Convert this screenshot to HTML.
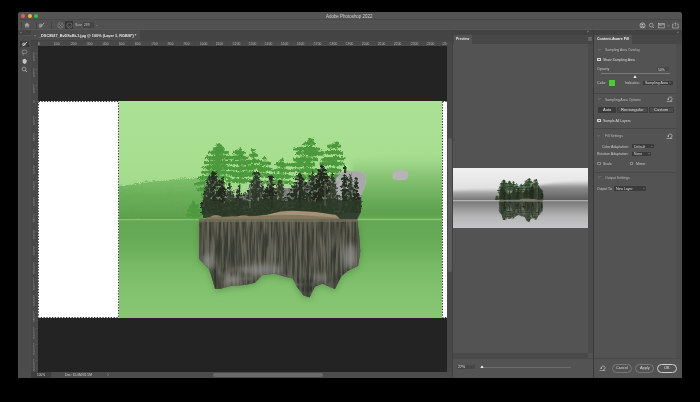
<!DOCTYPE html>
<html><head><meta charset="utf-8">
<style>
*{margin:0;padding:0;box-sizing:border-box}
html,body{width:700px;height:402px;background:#000;overflow:hidden;font-family:"Liberation Sans",sans-serif;color:#ddd}
div,span{position:absolute}
.t{will-change:transform;white-space:nowrap;font-size:3.6px;line-height:4px;color:#cfcfcf}
.b{font-weight:bold}
.dd{background:#3b3b3b;border-radius:0.6px}
.sep{background:#444}
svg{position:absolute;overflow:hidden}
</style></head><body>
<!-- window base -->
<div style="left:18px;top:12px;width:664px;height:366px;background:#535353;border-radius:3px 3px 0 0"></div>
<!-- title bar -->
<div style="left:18px;top:12px;width:664px;height:7.5px;background:#545454;border-radius:3px 3px 0 0"></div>
<div style="left:18px;top:19.2px;width:664px;height:0.8px;background:#494949"></div>
<div style="left:21px;top:13.75px;width:4px;height:4px;border-radius:50%;background:#ed5b53"></div>
<div style="left:27.5px;top:13.75px;width:4px;height:4px;border-radius:50%;background:#f4b733"></div>
<div style="left:34px;top:13.75px;width:4px;height:4px;border-radius:50%;background:#31c23f"></div>
<div class="t" style="left:326.4px;top:13.6px;font-size:4.45px;line-height:5px;color:#d4d4d4">Adobe Photoshop 2022</div>

<!-- options bar -->
<div style="left:18px;top:20px;width:664px;height:10px;background:#515151"></div>
<div style="left:18px;top:29.3px;width:664px;height:0.7px;background:#575757"></div>
<div class="sep" style="left:21.3px;top:21.5px;width:0.5px;height:7px"></div>
<div class="sep" style="left:35.5px;top:21.5px;width:0.5px;height:7px"></div>
<div class="sep" style="left:51.3px;top:21.5px;width:0.5px;height:7px"></div>
<!-- home icon -->
<svg style="left:24px;top:22px" width="6" height="6" viewBox="0 0 6 6"><path d="M0.5 3.1 L3 0.8 L5.5 3.1" fill="none" stroke="#a8a8a8" stroke-width="0.7"/><path d="M1.3 2.6 V5.4 H2.5 V4 H3.5 V5.4 H4.7 V2.6 L3 1.2Z" fill="#a8a8a8"/></svg>
<!-- brush icon -->
<svg style="left:37.5px;top:21.8px" width="7" height="6.5" viewBox="0 0 7 6.5"><circle cx="2.6" cy="3.6" r="2" fill="#858585"/><path d="M1.6 5.6 L6.4 0.8" stroke="#b5b5b5" stroke-width="0.9"/></svg>
<div class="t" style="left:46.5px;top:23px;color:#777">-</div>
<!-- circle icons -->
<svg style="left:56.5px;top:21.8px" width="7" height="7" viewBox="0 0 7 7"><circle cx="3.5" cy="3.5" r="2.7" fill="none" stroke="#9a9a9a" stroke-width="0.5"/><path d="M2.1 2.1 L4.9 4.9 M4.9 2.1 L2.1 4.9" stroke="#9a9a9a" stroke-width="0.45"/></svg>
<div style="left:65px;top:21.3px;width:8px;height:7.8px;background:#353535;border-radius:0.5px"></div>
<svg style="left:65.5px;top:21.7px" width="7" height="7" viewBox="0 0 7 7"><circle cx="3.5" cy="3.5" r="2.6" fill="none" stroke="#9a9a9a" stroke-width="0.5"/><path d="M2.2 4 Q3.5 5 4.8 4" fill="none" stroke="#9a9a9a" stroke-width="0.4"/></svg>
<div class="t" style="left:75px;top:23.3px;color:#b8b8b8">Size</div>
<div class="dd" style="left:82.8px;top:22px;width:11.5px;height:6px;background:#454545"></div>
<div class="t" style="left:84px;top:23.2px;color:#c8c8c8;font-size:3.3px">299</div>
<svg style="left:95.6px;top:24.6px" width="2.4" height="1.6" viewBox="0 0 2.4 1.6"><path d="M0.3 0.3 L1.2 1.2 L2.1 0.3" fill="none" stroke="#b0b0b0" stroke-width="0.45"/></svg>
<!-- right icons -->
<svg style="left:639px;top:21.5px" width="40" height="7" viewBox="0 0 40 7">
 <circle cx="3.5" cy="3.4" r="2.5" fill="none" stroke="#d0d0d0" stroke-width="0.7"/><circle cx="3.4" cy="2.6" r="0.9" fill="#d0d0d0"/><path d="M1.9 5.2 Q3.4 3.6 4.9 5.2" fill="none" stroke="#d0d0d0" stroke-width="0.7"/><path d="M5 5.4 L5.9 6.3" stroke="#d0d0d0" stroke-width="0.5"/>
 <circle cx="12.3" cy="3.2" r="1.9" fill="none" stroke="#c8c8c8" stroke-width="0.6"/><path d="M13.6 4.5 L15 5.9" stroke="#c8c8c8" stroke-width="0.7"/>
 <rect x="19.6" y="1.3" width="5.6" height="4.6" fill="none" stroke="#c8c8c8" stroke-width="0.55"/><path d="M19.6 2.6 H25.2 M20.6 3.5 H22.4" stroke="#c8c8c8" stroke-width="0.5"/>
 <path d="M28.4 3 L29.5 4.1 L30.6 3" fill="none" stroke="#aaa" stroke-width="0.45"/>
 <path d="M34.8 2 H33.6 V6 H39.2 V2 H38" fill="none" stroke="#c8c8c8" stroke-width="0.55"/><path d="M36.4 4.2 V0.8 M35.4 1.8 L36.4 0.8 L37.4 1.8" fill="none" stroke="#c8c8c8" stroke-width="0.5"/>
</svg>

<!-- tab row doc -->
<div style="left:18px;top:30px;width:435px;height:10.5px;background:#444"></div>
<div style="left:31px;top:30.3px;width:108.8px;height:10.2px;background:#4c4c4c"></div>
<div class="t" style="left:33.6px;top:33.6px;color:#aaa;font-size:3.4px">×</div>
<div class="t b" style="left:39.4px;top:33.6px;font-size:3.81px;color:#e6e6e6">_DSC8927_BvDScBt-1.jpg @ 100% (Layer 1, RGB/8*) *</div>

<!-- tools panel -->
<div style="left:18px;top:30px;width:13px;height:342px;background:#4b4b4b"></div>
<div style="left:18px;top:30px;width:13px;height:5px;background:#434343"></div>
<div class="t" style="left:20px;top:30.6px;color:#aaa;font-size:3.4px">«</div>
<div style="left:19.5px;top:35.3px;width:11px;height:0.5px;background:#545454"></div>
<div style="left:20.1px;top:40.5px;width:8.7px;height:6.8px;background:#393939;border-radius:0.5px"></div>
<svg style="left:21px;top:41px" width="7" height="6" viewBox="0 0 7 6"><circle cx="2.8" cy="3.2" r="1.9" fill="#888"/><path d="M1.8 5.2 L6.2 0.8" stroke="#d6d6d6" stroke-width="0.9"/></svg>
<svg style="left:21px;top:49px" width="7" height="7" viewBox="0 0 7 7"><ellipse cx="3.5" cy="2.8" rx="2.6" ry="1.8" fill="none" stroke="#bdbdbd" stroke-width="0.5"/><path d="M2 4.4 Q1.5 6 3 6.3" fill="none" stroke="#bdbdbd" stroke-width="0.5"/><circle cx="5.9" cy="6.2" r="0.3" fill="#999"/></svg>
<svg style="left:21px;top:57.6px" width="7" height="7" viewBox="0 0 7 7"><path d="M1.5 3 Q1.5 1 2.5 1.2 Q3 0.3 3.8 1 Q4.8 0.6 5 1.8 Q6 2 5.8 3.5 Q5.6 5.8 3.5 6 Q1.4 5.8 1.5 3Z" fill="#c4c4c4"/></svg>
<svg style="left:21px;top:65.5px" width="7" height="7" viewBox="0 0 7 7"><circle cx="3" cy="3" r="1.9" fill="none" stroke="#c4c4c4" stroke-width="0.6"/><path d="M4.3 4.3 L6 6" stroke="#c4c4c4" stroke-width="0.8"/></svg>

<!-- h ruler -->
<div style="left:31px;top:40.5px;width:416px;height:5.5px;background:#484848"></div>
<div style="left:31px;top:40.5px;width:7px;height:5.5px;background:#444"></div>

<!-- v ruler -->
<div style="left:31px;top:46px;width:7px;height:326px;background:#484848"></div>
<!-- canvas -->
<div style="left:38px;top:46px;width:409px;height:326px;background:#232323"></div>
<!-- v scrollbar -->
<div style="left:447px;top:40.5px;width:5.5px;height:331.5px;background:#484848"></div>
<div style="left:447.5px;top:138.2px;width:4.3px;height:133.4px;border-radius:2.1px;background:#5c5c5c"></div>
<!--RULERS-->
<div style="left:38px;top:40.5px;width:409px;height:5.5px;overflow:hidden">
<div style="left:-0.30px;top:1.5px;width:0.5px;height:4px;background:#545454"></div>
<div style="left:4.05px;top:4.5px;width:0.4px;height:1px;background:#505050"></div>
<div style="left:8.09px;top:4.5px;width:0.4px;height:1px;background:#505050"></div>
<div style="left:12.14px;top:4.5px;width:0.4px;height:1px;background:#505050"></div>
<div class="t" style="left:0.30px;top:2.5px;font-size:3.3px;line-height:3.3px;color:#b4b4b4">0</div>
<div style="left:15.89px;top:1.5px;width:0.5px;height:4px;background:#545454"></div>
<div style="left:20.24px;top:4.5px;width:0.4px;height:1px;background:#505050"></div>
<div style="left:24.28px;top:4.5px;width:0.4px;height:1px;background:#505050"></div>
<div style="left:28.33px;top:4.5px;width:0.4px;height:1px;background:#505050"></div>
<div class="t" style="left:16.49px;top:2.5px;font-size:3.3px;line-height:3.3px;color:#b4b4b4">100</div>
<div style="left:32.08px;top:1.5px;width:0.5px;height:4px;background:#545454"></div>
<div style="left:36.43px;top:4.5px;width:0.4px;height:1px;background:#505050"></div>
<div style="left:40.48px;top:4.5px;width:0.4px;height:1px;background:#505050"></div>
<div style="left:44.52px;top:4.5px;width:0.4px;height:1px;background:#505050"></div>
<div class="t" style="left:32.68px;top:2.5px;font-size:3.3px;line-height:3.3px;color:#b4b4b4">200</div>
<div style="left:48.27px;top:1.5px;width:0.5px;height:4px;background:#545454"></div>
<div style="left:52.62px;top:4.5px;width:0.4px;height:1px;background:#505050"></div>
<div style="left:56.67px;top:4.5px;width:0.4px;height:1px;background:#505050"></div>
<div style="left:60.71px;top:4.5px;width:0.4px;height:1px;background:#505050"></div>
<div class="t" style="left:48.87px;top:2.5px;font-size:3.3px;line-height:3.3px;color:#b4b4b4">300</div>
<div style="left:64.46px;top:1.5px;width:0.5px;height:4px;background:#545454"></div>
<div style="left:68.81px;top:4.5px;width:0.4px;height:1px;background:#505050"></div>
<div style="left:72.86px;top:4.5px;width:0.4px;height:1px;background:#505050"></div>
<div style="left:76.90px;top:4.5px;width:0.4px;height:1px;background:#505050"></div>
<div class="t" style="left:65.06px;top:2.5px;font-size:3.3px;line-height:3.3px;color:#b4b4b4">400</div>
<div style="left:80.65px;top:1.5px;width:0.5px;height:4px;background:#545454"></div>
<div style="left:85.00px;top:4.5px;width:0.4px;height:1px;background:#505050"></div>
<div style="left:89.05px;top:4.5px;width:0.4px;height:1px;background:#505050"></div>
<div style="left:93.09px;top:4.5px;width:0.4px;height:1px;background:#505050"></div>
<div class="t" style="left:81.25px;top:2.5px;font-size:3.3px;line-height:3.3px;color:#b4b4b4">500</div>
<div style="left:96.84px;top:1.5px;width:0.5px;height:4px;background:#545454"></div>
<div style="left:101.19px;top:4.5px;width:0.4px;height:1px;background:#505050"></div>
<div style="left:105.23px;top:4.5px;width:0.4px;height:1px;background:#505050"></div>
<div style="left:109.28px;top:4.5px;width:0.4px;height:1px;background:#505050"></div>
<div class="t" style="left:97.44px;top:2.5px;font-size:3.3px;line-height:3.3px;color:#b4b4b4">600</div>
<div style="left:113.03px;top:1.5px;width:0.5px;height:4px;background:#545454"></div>
<div style="left:117.38px;top:4.5px;width:0.4px;height:1px;background:#505050"></div>
<div style="left:121.42px;top:4.5px;width:0.4px;height:1px;background:#505050"></div>
<div style="left:125.47px;top:4.5px;width:0.4px;height:1px;background:#505050"></div>
<div class="t" style="left:113.63px;top:2.5px;font-size:3.3px;line-height:3.3px;color:#b4b4b4">700</div>
<div style="left:129.22px;top:1.5px;width:0.5px;height:4px;background:#545454"></div>
<div style="left:133.57px;top:4.5px;width:0.4px;height:1px;background:#505050"></div>
<div style="left:137.61px;top:4.5px;width:0.4px;height:1px;background:#505050"></div>
<div style="left:141.66px;top:4.5px;width:0.4px;height:1px;background:#505050"></div>
<div class="t" style="left:129.82px;top:2.5px;font-size:3.3px;line-height:3.3px;color:#b4b4b4">800</div>
<div style="left:145.41px;top:1.5px;width:0.5px;height:4px;background:#545454"></div>
<div style="left:149.76px;top:4.5px;width:0.4px;height:1px;background:#505050"></div>
<div style="left:153.80px;top:4.5px;width:0.4px;height:1px;background:#505050"></div>
<div style="left:157.85px;top:4.5px;width:0.4px;height:1px;background:#505050"></div>
<div class="t" style="left:146.01px;top:2.5px;font-size:3.3px;line-height:3.3px;color:#b4b4b4">900</div>
<div style="left:161.60px;top:1.5px;width:0.5px;height:4px;background:#545454"></div>
<div style="left:165.95px;top:4.5px;width:0.4px;height:1px;background:#505050"></div>
<div style="left:169.99px;top:4.5px;width:0.4px;height:1px;background:#505050"></div>
<div style="left:174.04px;top:4.5px;width:0.4px;height:1px;background:#505050"></div>
<div class="t" style="left:162.20px;top:2.5px;font-size:3.3px;line-height:3.3px;color:#b4b4b4">1000</div>
<div style="left:177.79px;top:1.5px;width:0.5px;height:4px;background:#545454"></div>
<div style="left:182.14px;top:4.5px;width:0.4px;height:1px;background:#505050"></div>
<div style="left:186.18px;top:4.5px;width:0.4px;height:1px;background:#505050"></div>
<div style="left:190.23px;top:4.5px;width:0.4px;height:1px;background:#505050"></div>
<div class="t" style="left:178.39px;top:2.5px;font-size:3.3px;line-height:3.3px;color:#b4b4b4">1100</div>
<div style="left:193.98px;top:1.5px;width:0.5px;height:4px;background:#545454"></div>
<div style="left:198.33px;top:4.5px;width:0.4px;height:1px;background:#505050"></div>
<div style="left:202.38px;top:4.5px;width:0.4px;height:1px;background:#505050"></div>
<div style="left:206.42px;top:4.5px;width:0.4px;height:1px;background:#505050"></div>
<div class="t" style="left:194.58px;top:2.5px;font-size:3.3px;line-height:3.3px;color:#b4b4b4">1200</div>
<div style="left:210.17px;top:1.5px;width:0.5px;height:4px;background:#545454"></div>
<div style="left:214.52px;top:4.5px;width:0.4px;height:1px;background:#505050"></div>
<div style="left:218.57px;top:4.5px;width:0.4px;height:1px;background:#505050"></div>
<div style="left:222.61px;top:4.5px;width:0.4px;height:1px;background:#505050"></div>
<div class="t" style="left:210.77px;top:2.5px;font-size:3.3px;line-height:3.3px;color:#b4b4b4">1300</div>
<div style="left:226.36px;top:1.5px;width:0.5px;height:4px;background:#545454"></div>
<div style="left:230.71px;top:4.5px;width:0.4px;height:1px;background:#505050"></div>
<div style="left:234.76px;top:4.5px;width:0.4px;height:1px;background:#505050"></div>
<div style="left:238.80px;top:4.5px;width:0.4px;height:1px;background:#505050"></div>
<div class="t" style="left:226.96px;top:2.5px;font-size:3.3px;line-height:3.3px;color:#b4b4b4">1400</div>
<div style="left:242.55px;top:1.5px;width:0.5px;height:4px;background:#545454"></div>
<div style="left:246.90px;top:4.5px;width:0.4px;height:1px;background:#505050"></div>
<div style="left:250.95px;top:4.5px;width:0.4px;height:1px;background:#505050"></div>
<div style="left:254.99px;top:4.5px;width:0.4px;height:1px;background:#505050"></div>
<div class="t" style="left:243.15px;top:2.5px;font-size:3.3px;line-height:3.3px;color:#b4b4b4">1500</div>
<div style="left:258.74px;top:1.5px;width:0.5px;height:4px;background:#545454"></div>
<div style="left:263.09px;top:4.5px;width:0.4px;height:1px;background:#505050"></div>
<div style="left:267.14px;top:4.5px;width:0.4px;height:1px;background:#505050"></div>
<div style="left:271.18px;top:4.5px;width:0.4px;height:1px;background:#505050"></div>
<div class="t" style="left:259.34px;top:2.5px;font-size:3.3px;line-height:3.3px;color:#b4b4b4">1600</div>
<div style="left:274.93px;top:1.5px;width:0.5px;height:4px;background:#545454"></div>
<div style="left:279.28px;top:4.5px;width:0.4px;height:1px;background:#505050"></div>
<div style="left:283.33px;top:4.5px;width:0.4px;height:1px;background:#505050"></div>
<div style="left:287.37px;top:4.5px;width:0.4px;height:1px;background:#505050"></div>
<div class="t" style="left:275.53px;top:2.5px;font-size:3.3px;line-height:3.3px;color:#b4b4b4">1700</div>
<div style="left:291.12px;top:1.5px;width:0.5px;height:4px;background:#545454"></div>
<div style="left:295.47px;top:4.5px;width:0.4px;height:1px;background:#505050"></div>
<div style="left:299.52px;top:4.5px;width:0.4px;height:1px;background:#505050"></div>
<div style="left:303.56px;top:4.5px;width:0.4px;height:1px;background:#505050"></div>
<div class="t" style="left:291.72px;top:2.5px;font-size:3.3px;line-height:3.3px;color:#b4b4b4">1800</div>
<div style="left:307.31px;top:1.5px;width:0.5px;height:4px;background:#545454"></div>
<div style="left:311.66px;top:4.5px;width:0.4px;height:1px;background:#505050"></div>
<div style="left:315.71px;top:4.5px;width:0.4px;height:1px;background:#505050"></div>
<div style="left:319.75px;top:4.5px;width:0.4px;height:1px;background:#505050"></div>
<div class="t" style="left:307.91px;top:2.5px;font-size:3.3px;line-height:3.3px;color:#b4b4b4">1900</div>
<div style="left:323.50px;top:1.5px;width:0.5px;height:4px;background:#545454"></div>
<div style="left:327.85px;top:4.5px;width:0.4px;height:1px;background:#505050"></div>
<div style="left:331.90px;top:4.5px;width:0.4px;height:1px;background:#505050"></div>
<div style="left:335.94px;top:4.5px;width:0.4px;height:1px;background:#505050"></div>
<div class="t" style="left:324.10px;top:2.5px;font-size:3.3px;line-height:3.3px;color:#b4b4b4">2000</div>
<div style="left:339.69px;top:1.5px;width:0.5px;height:4px;background:#545454"></div>
<div style="left:344.04px;top:4.5px;width:0.4px;height:1px;background:#505050"></div>
<div style="left:348.09px;top:4.5px;width:0.4px;height:1px;background:#505050"></div>
<div style="left:352.13px;top:4.5px;width:0.4px;height:1px;background:#505050"></div>
<div class="t" style="left:340.29px;top:2.5px;font-size:3.3px;line-height:3.3px;color:#b4b4b4">2100</div>
<div style="left:355.88px;top:1.5px;width:0.5px;height:4px;background:#545454"></div>
<div style="left:360.23px;top:4.5px;width:0.4px;height:1px;background:#505050"></div>
<div style="left:364.28px;top:4.5px;width:0.4px;height:1px;background:#505050"></div>
<div style="left:368.32px;top:4.5px;width:0.4px;height:1px;background:#505050"></div>
<div class="t" style="left:356.48px;top:2.5px;font-size:3.3px;line-height:3.3px;color:#b4b4b4">2200</div>
<div style="left:372.07px;top:1.5px;width:0.5px;height:4px;background:#545454"></div>
<div style="left:376.42px;top:4.5px;width:0.4px;height:1px;background:#505050"></div>
<div style="left:380.47px;top:4.5px;width:0.4px;height:1px;background:#505050"></div>
<div style="left:384.51px;top:4.5px;width:0.4px;height:1px;background:#505050"></div>
<div class="t" style="left:372.67px;top:2.5px;font-size:3.3px;line-height:3.3px;color:#b4b4b4">2300</div>
<div style="left:388.26px;top:1.5px;width:0.5px;height:4px;background:#545454"></div>
<div style="left:392.61px;top:4.5px;width:0.4px;height:1px;background:#505050"></div>
<div style="left:396.66px;top:4.5px;width:0.4px;height:1px;background:#505050"></div>
<div style="left:400.70px;top:4.5px;width:0.4px;height:1px;background:#505050"></div>
<div class="t" style="left:388.86px;top:2.5px;font-size:3.3px;line-height:3.3px;color:#b4b4b4">2400</div>
<div style="left:404.45px;top:1.5px;width:0.5px;height:4px;background:#545454"></div>
<div style="left:408.80px;top:4.5px;width:0.4px;height:1px;background:#505050"></div>
<div class="t" style="left:405.05px;top:2.5px;font-size:3.3px;line-height:3.3px;color:#b4b4b4">2500</div>
</div>
<div style="left:31px;top:46px;width:7px;height:326px;overflow:hidden">
<div style="left:4px;top:-9.56px;width:3px;height:0.5px;background:#545454"></div>
<div style="left:6px;top:2.88px;width:1px;height:0.4px;background:#505050"></div>
<div class="t" style="left:2px;top:-8.46px;font-size:2.6px;line-height:2.9px;color:#9a9a9a">4</div>
<div class="t" style="left:2px;top:-5.56px;font-size:2.6px;line-height:2.9px;color:#9a9a9a">0</div>
<div class="t" style="left:2px;top:-2.66px;font-size:2.6px;line-height:2.9px;color:#9a9a9a">0</div>
<div style="left:4px;top:6.63px;width:3px;height:0.5px;background:#545454"></div>
<div style="left:6px;top:10.98px;width:1px;height:0.4px;background:#505050"></div>
<div style="left:6px;top:15.02px;width:1px;height:0.4px;background:#505050"></div>
<div style="left:6px;top:19.07px;width:1px;height:0.4px;background:#505050"></div>
<div class="t" style="left:2px;top:7.73px;font-size:2.6px;line-height:2.9px;color:#9a9a9a">3</div>
<div class="t" style="left:2px;top:10.63px;font-size:2.6px;line-height:2.9px;color:#9a9a9a">0</div>
<div class="t" style="left:2px;top:13.53px;font-size:2.6px;line-height:2.9px;color:#9a9a9a">0</div>
<div style="left:4px;top:22.82px;width:3px;height:0.5px;background:#545454"></div>
<div style="left:6px;top:27.17px;width:1px;height:0.4px;background:#505050"></div>
<div style="left:6px;top:31.22px;width:1px;height:0.4px;background:#505050"></div>
<div style="left:6px;top:35.26px;width:1px;height:0.4px;background:#505050"></div>
<div class="t" style="left:2px;top:23.92px;font-size:2.6px;line-height:2.9px;color:#9a9a9a">2</div>
<div class="t" style="left:2px;top:26.82px;font-size:2.6px;line-height:2.9px;color:#9a9a9a">0</div>
<div class="t" style="left:2px;top:29.72px;font-size:2.6px;line-height:2.9px;color:#9a9a9a">0</div>
<div style="left:4px;top:39.01px;width:3px;height:0.5px;background:#545454"></div>
<div style="left:6px;top:43.36px;width:1px;height:0.4px;background:#505050"></div>
<div style="left:6px;top:47.41px;width:1px;height:0.4px;background:#505050"></div>
<div style="left:6px;top:51.45px;width:1px;height:0.4px;background:#505050"></div>
<div class="t" style="left:2px;top:40.11px;font-size:2.6px;line-height:2.9px;color:#9a9a9a">1</div>
<div class="t" style="left:2px;top:43.01px;font-size:2.6px;line-height:2.9px;color:#9a9a9a">0</div>
<div class="t" style="left:2px;top:45.91px;font-size:2.6px;line-height:2.9px;color:#9a9a9a">0</div>
<div style="left:4px;top:55.20px;width:3px;height:0.5px;background:#545454"></div>
<div style="left:6px;top:59.55px;width:1px;height:0.4px;background:#505050"></div>
<div style="left:6px;top:63.59px;width:1px;height:0.4px;background:#505050"></div>
<div style="left:6px;top:67.64px;width:1px;height:0.4px;background:#505050"></div>
<div class="t" style="left:2px;top:56.30px;font-size:2.6px;line-height:2.9px;color:#9a9a9a">0</div>
<div style="left:4px;top:71.39px;width:3px;height:0.5px;background:#545454"></div>
<div style="left:6px;top:75.74px;width:1px;height:0.4px;background:#505050"></div>
<div style="left:6px;top:79.78px;width:1px;height:0.4px;background:#505050"></div>
<div style="left:6px;top:83.83px;width:1px;height:0.4px;background:#505050"></div>
<div class="t" style="left:2px;top:72.49px;font-size:2.6px;line-height:2.9px;color:#9a9a9a">1</div>
<div class="t" style="left:2px;top:75.39px;font-size:2.6px;line-height:2.9px;color:#9a9a9a">0</div>
<div class="t" style="left:2px;top:78.29px;font-size:2.6px;line-height:2.9px;color:#9a9a9a">0</div>
<div style="left:4px;top:87.58px;width:3px;height:0.5px;background:#545454"></div>
<div style="left:6px;top:91.93px;width:1px;height:0.4px;background:#505050"></div>
<div style="left:6px;top:95.97px;width:1px;height:0.4px;background:#505050"></div>
<div style="left:6px;top:100.02px;width:1px;height:0.4px;background:#505050"></div>
<div class="t" style="left:2px;top:88.68px;font-size:2.6px;line-height:2.9px;color:#9a9a9a">2</div>
<div class="t" style="left:2px;top:91.58px;font-size:2.6px;line-height:2.9px;color:#9a9a9a">0</div>
<div class="t" style="left:2px;top:94.48px;font-size:2.6px;line-height:2.9px;color:#9a9a9a">0</div>
<div style="left:4px;top:103.77px;width:3px;height:0.5px;background:#545454"></div>
<div style="left:6px;top:108.12px;width:1px;height:0.4px;background:#505050"></div>
<div style="left:6px;top:112.16px;width:1px;height:0.4px;background:#505050"></div>
<div style="left:6px;top:116.21px;width:1px;height:0.4px;background:#505050"></div>
<div class="t" style="left:2px;top:104.87px;font-size:2.6px;line-height:2.9px;color:#9a9a9a">3</div>
<div class="t" style="left:2px;top:107.77px;font-size:2.6px;line-height:2.9px;color:#9a9a9a">0</div>
<div class="t" style="left:2px;top:110.67px;font-size:2.6px;line-height:2.9px;color:#9a9a9a">0</div>
<div style="left:4px;top:119.96px;width:3px;height:0.5px;background:#545454"></div>
<div style="left:6px;top:124.31px;width:1px;height:0.4px;background:#505050"></div>
<div style="left:6px;top:128.35px;width:1px;height:0.4px;background:#505050"></div>
<div style="left:6px;top:132.40px;width:1px;height:0.4px;background:#505050"></div>
<div class="t" style="left:2px;top:121.06px;font-size:2.6px;line-height:2.9px;color:#9a9a9a">4</div>
<div class="t" style="left:2px;top:123.96px;font-size:2.6px;line-height:2.9px;color:#9a9a9a">0</div>
<div class="t" style="left:2px;top:126.86px;font-size:2.6px;line-height:2.9px;color:#9a9a9a">0</div>
<div style="left:4px;top:136.15px;width:3px;height:0.5px;background:#545454"></div>
<div style="left:6px;top:140.50px;width:1px;height:0.4px;background:#505050"></div>
<div style="left:6px;top:144.54px;width:1px;height:0.4px;background:#505050"></div>
<div style="left:6px;top:148.59px;width:1px;height:0.4px;background:#505050"></div>
<div class="t" style="left:2px;top:137.25px;font-size:2.6px;line-height:2.9px;color:#9a9a9a">5</div>
<div class="t" style="left:2px;top:140.15px;font-size:2.6px;line-height:2.9px;color:#9a9a9a">0</div>
<div class="t" style="left:2px;top:143.05px;font-size:2.6px;line-height:2.9px;color:#9a9a9a">0</div>
<div style="left:4px;top:152.34px;width:3px;height:0.5px;background:#545454"></div>
<div style="left:6px;top:156.69px;width:1px;height:0.4px;background:#505050"></div>
<div style="left:6px;top:160.74px;width:1px;height:0.4px;background:#505050"></div>
<div style="left:6px;top:164.78px;width:1px;height:0.4px;background:#505050"></div>
<div class="t" style="left:2px;top:153.44px;font-size:2.6px;line-height:2.9px;color:#9a9a9a">6</div>
<div class="t" style="left:2px;top:156.34px;font-size:2.6px;line-height:2.9px;color:#9a9a9a">0</div>
<div class="t" style="left:2px;top:159.24px;font-size:2.6px;line-height:2.9px;color:#9a9a9a">0</div>
<div style="left:4px;top:168.53px;width:3px;height:0.5px;background:#545454"></div>
<div style="left:6px;top:172.88px;width:1px;height:0.4px;background:#505050"></div>
<div style="left:6px;top:176.93px;width:1px;height:0.4px;background:#505050"></div>
<div style="left:6px;top:180.97px;width:1px;height:0.4px;background:#505050"></div>
<div class="t" style="left:2px;top:169.63px;font-size:2.6px;line-height:2.9px;color:#9a9a9a">7</div>
<div class="t" style="left:2px;top:172.53px;font-size:2.6px;line-height:2.9px;color:#9a9a9a">0</div>
<div class="t" style="left:2px;top:175.43px;font-size:2.6px;line-height:2.9px;color:#9a9a9a">0</div>
<div style="left:4px;top:184.72px;width:3px;height:0.5px;background:#545454"></div>
<div style="left:6px;top:189.07px;width:1px;height:0.4px;background:#505050"></div>
<div style="left:6px;top:193.12px;width:1px;height:0.4px;background:#505050"></div>
<div style="left:6px;top:197.16px;width:1px;height:0.4px;background:#505050"></div>
<div class="t" style="left:2px;top:185.82px;font-size:2.6px;line-height:2.9px;color:#9a9a9a">8</div>
<div class="t" style="left:2px;top:188.72px;font-size:2.6px;line-height:2.9px;color:#9a9a9a">0</div>
<div class="t" style="left:2px;top:191.62px;font-size:2.6px;line-height:2.9px;color:#9a9a9a">0</div>
<div style="left:4px;top:200.91px;width:3px;height:0.5px;background:#545454"></div>
<div style="left:6px;top:205.26px;width:1px;height:0.4px;background:#505050"></div>
<div style="left:6px;top:209.31px;width:1px;height:0.4px;background:#505050"></div>
<div style="left:6px;top:213.35px;width:1px;height:0.4px;background:#505050"></div>
<div class="t" style="left:2px;top:202.01px;font-size:2.6px;line-height:2.9px;color:#9a9a9a">9</div>
<div class="t" style="left:2px;top:204.91px;font-size:2.6px;line-height:2.9px;color:#9a9a9a">0</div>
<div class="t" style="left:2px;top:207.81px;font-size:2.6px;line-height:2.9px;color:#9a9a9a">0</div>
<div style="left:4px;top:217.10px;width:3px;height:0.5px;background:#545454"></div>
<div style="left:6px;top:221.45px;width:1px;height:0.4px;background:#505050"></div>
<div style="left:6px;top:225.50px;width:1px;height:0.4px;background:#505050"></div>
<div style="left:6px;top:229.54px;width:1px;height:0.4px;background:#505050"></div>
<div class="t" style="left:2px;top:218.20px;font-size:2.6px;line-height:2.9px;color:#9a9a9a">1</div>
<div class="t" style="left:2px;top:221.10px;font-size:2.6px;line-height:2.9px;color:#9a9a9a">0</div>
<div class="t" style="left:2px;top:224.00px;font-size:2.6px;line-height:2.9px;color:#9a9a9a">0</div>
<div class="t" style="left:2px;top:226.90px;font-size:2.6px;line-height:2.9px;color:#9a9a9a">0</div>
<div style="left:4px;top:233.29px;width:3px;height:0.5px;background:#545454"></div>
<div style="left:6px;top:237.64px;width:1px;height:0.4px;background:#505050"></div>
<div style="left:6px;top:241.69px;width:1px;height:0.4px;background:#505050"></div>
<div style="left:6px;top:245.73px;width:1px;height:0.4px;background:#505050"></div>
<div class="t" style="left:2px;top:234.39px;font-size:2.6px;line-height:2.9px;color:#9a9a9a">1</div>
<div class="t" style="left:2px;top:237.29px;font-size:2.6px;line-height:2.9px;color:#9a9a9a">1</div>
<div class="t" style="left:2px;top:240.19px;font-size:2.6px;line-height:2.9px;color:#9a9a9a">0</div>
<div class="t" style="left:2px;top:243.09px;font-size:2.6px;line-height:2.9px;color:#9a9a9a">0</div>
<div style="left:4px;top:249.48px;width:3px;height:0.5px;background:#545454"></div>
<div style="left:6px;top:253.83px;width:1px;height:0.4px;background:#505050"></div>
<div style="left:6px;top:257.88px;width:1px;height:0.4px;background:#505050"></div>
<div style="left:6px;top:261.92px;width:1px;height:0.4px;background:#505050"></div>
<div class="t" style="left:2px;top:250.58px;font-size:2.6px;line-height:2.9px;color:#9a9a9a">1</div>
<div class="t" style="left:2px;top:253.48px;font-size:2.6px;line-height:2.9px;color:#9a9a9a">2</div>
<div class="t" style="left:2px;top:256.38px;font-size:2.6px;line-height:2.9px;color:#9a9a9a">0</div>
<div class="t" style="left:2px;top:259.28px;font-size:2.6px;line-height:2.9px;color:#9a9a9a">0</div>
<div style="left:4px;top:265.67px;width:3px;height:0.5px;background:#545454"></div>
<div style="left:6px;top:270.02px;width:1px;height:0.4px;background:#505050"></div>
<div style="left:6px;top:274.07px;width:1px;height:0.4px;background:#505050"></div>
<div style="left:6px;top:278.11px;width:1px;height:0.4px;background:#505050"></div>
<div class="t" style="left:2px;top:266.77px;font-size:2.6px;line-height:2.9px;color:#9a9a9a">1</div>
<div class="t" style="left:2px;top:269.67px;font-size:2.6px;line-height:2.9px;color:#9a9a9a">3</div>
<div class="t" style="left:2px;top:272.57px;font-size:2.6px;line-height:2.9px;color:#9a9a9a">0</div>
<div class="t" style="left:2px;top:275.47px;font-size:2.6px;line-height:2.9px;color:#9a9a9a">0</div>
<div style="left:4px;top:281.86px;width:3px;height:0.5px;background:#545454"></div>
<div style="left:6px;top:286.21px;width:1px;height:0.4px;background:#505050"></div>
<div style="left:6px;top:290.26px;width:1px;height:0.4px;background:#505050"></div>
<div style="left:6px;top:294.30px;width:1px;height:0.4px;background:#505050"></div>
<div class="t" style="left:2px;top:282.96px;font-size:2.6px;line-height:2.9px;color:#9a9a9a">1</div>
<div class="t" style="left:2px;top:285.86px;font-size:2.6px;line-height:2.9px;color:#9a9a9a">4</div>
<div class="t" style="left:2px;top:288.76px;font-size:2.6px;line-height:2.9px;color:#9a9a9a">0</div>
<div class="t" style="left:2px;top:291.66px;font-size:2.6px;line-height:2.9px;color:#9a9a9a">0</div>
<div style="left:4px;top:298.05px;width:3px;height:0.5px;background:#545454"></div>
<div style="left:6px;top:302.40px;width:1px;height:0.4px;background:#505050"></div>
<div style="left:6px;top:306.45px;width:1px;height:0.4px;background:#505050"></div>
<div style="left:6px;top:310.49px;width:1px;height:0.4px;background:#505050"></div>
<div class="t" style="left:2px;top:299.15px;font-size:2.6px;line-height:2.9px;color:#9a9a9a">1</div>
<div class="t" style="left:2px;top:302.05px;font-size:2.6px;line-height:2.9px;color:#9a9a9a">5</div>
<div class="t" style="left:2px;top:304.95px;font-size:2.6px;line-height:2.9px;color:#9a9a9a">0</div>
<div class="t" style="left:2px;top:307.85px;font-size:2.6px;line-height:2.9px;color:#9a9a9a">0</div>
<div style="left:4px;top:314.24px;width:3px;height:0.5px;background:#545454"></div>
<div style="left:6px;top:318.59px;width:1px;height:0.4px;background:#505050"></div>
<div style="left:6px;top:322.64px;width:1px;height:0.4px;background:#505050"></div>
<div class="t" style="left:2px;top:315.34px;font-size:2.6px;line-height:2.9px;color:#9a9a9a">1</div>
<div class="t" style="left:2px;top:318.24px;font-size:2.6px;line-height:2.9px;color:#9a9a9a">6</div>
<div class="t" style="left:2px;top:321.14px;font-size:2.6px;line-height:2.9px;color:#9a9a9a">0</div>
<div class="t" style="left:2px;top:324.04px;font-size:2.6px;line-height:2.9px;color:#9a9a9a">0</div>
</div>
<!--/RULERS-->
<!-- status bar -->
<div style="left:18px;top:372px;width:435px;height:6px;background:#4c4c4c"></div>
<div style="left:31px;top:372px;width:19.6px;height:6px;background:#3e3e3e"></div>
<div class="t" style="left:37px;top:373.1px;font-size:3.2px;color:#d0d0d0">100%</div>
<div class="t" style="left:64.7px;top:373.1px;font-size:3.3px;color:#cfcfcf">Doc: 15.0M/31.5M</div>
<svg style="left:106.8px;top:373.4px" width="2" height="3.4" viewBox="0 0 2 3.4"><path d="M0.3 0.3 L1.6 1.7 L0.3 3.1" fill="none" stroke="#b0b0b0" stroke-width="0.45"/></svg>
<div style="left:213px;top:373px;width:110px;height:4.3px;border-radius:2.2px;background:#6a6a6a"></div>

<!-- PREVIEW panel -->
<div style="left:452.2px;top:30px;width:0.8px;height:348px;background:#414141"></div>
<div style="left:453px;top:30px;width:140px;height:4.6px;background:#424242"></div>
<div class="t" style="left:587px;top:30.3px;font-size:3px;color:#aaa">»</div>
<div style="left:453px;top:34.6px;width:140px;height:9px;background:#474747"></div>
<div style="left:453.7px;top:34.6px;width:18.5px;height:9px;background:#535353"></div>
<div class="t b" style="left:455.9px;top:37px;font-size:3.5px;color:#e6e6e6">Preview</div>

<div style="left:588.3px;top:43.6px;width:4.7px;height:309.4px;background:#4b4b4b"></div>
<div style="left:453px;top:353.3px;width:135.3px;height:4.4px;background:#494949"></div>
<!-- preview footer -->
<div style="left:453px;top:358px;width:140px;height:20px;background:#535353;border-top:0.5px solid #494949"></div>
<div style="left:457px;top:364.5px;width:17.7px;height:4.6px;background:#474747"></div>
<div class="t" style="left:458px;top:365px;font-size:3.5px;color:#e6e6e6">27%</div>
<div style="left:482px;top:366.9px;width:88.5px;height:0.45px;background:#6c6c6c"></div>
<svg style="left:480.3px;top:365px" width="4" height="3.3" viewBox="0 0 4 3.3"><path d="M0.3 3.1 L1.8 0.6 Q2 0.3 2.2 0.6 L3.7 3.1Z" fill="#eaeaea"/></svg>

<!-- CAF panel -->
<div style="left:593px;top:30px;width:0.8px;height:348px;background:#3a3a3a"></div>
<div style="left:593.8px;top:30px;width:88.2px;height:5px;background:#424242"></div>
<div class="t" style="left:677.3px;top:30.7px;font-size:3px;color:#aaa">«</div>
<div style="left:593.8px;top:35px;width:88.2px;height:8.7px;background:#474747"></div>
<div style="left:593.7px;top:35px;width:38px;height:8.7px;background:#535353"></div>
<div class="t b" style="left:597px;top:37px;font-size:3.63px;color:#ececec">Content-Aware Fill</div>
<div style="left:676.2px;top:43.7px;width:5.8px;height:314.6px;background:#4e4e4e"></div>
<!-- dock strip left of CAF -->
<div style="left:585px;top:35px;width:8px;height:8.6px;background:#474747"></div>
<svg style="left:587.8px;top:37.3px" width="4" height="4" viewBox="0 0 4 4"><path d="M0.2 0.7H3.8M0.2 1.9H3.8M0.2 3.1H3.8" stroke="#9a9a9a" stroke-width="0.55"/></svg>

<!-- section: Sampling Area Overlay -->
<svg style="left:597.5px;top:48.5px" width="3" height="2" viewBox="0 0 3 2"><path d="M0.3 0.4 L1.5 1.4 L2.7 0.4" fill="none" stroke="#a8a8a8" stroke-width="0.45"/></svg>
<div class="t" style="left:605px;top:48.35px;font-size:3.41px;color:#bcbcbc">Sampling Area Overlay</div>
<div style="left:597.1px;top:58.0px;width:3.5px;height:3.4px;border:0.5px solid #d0d0d0;border-radius:0.6px;background:#3d3d3d"></div><svg style="left:597.35px;top:58.20px" width="3" height="3" viewBox="0 0 3 3"><path d="M0.7 1.5 L1.3 2.1 L2.4 0.9" fill="none" stroke="#eee" stroke-width="0.5"/></svg>
<div class="t" style="left:603px;top:58.25px;font-size:3.45px;color:#dcdcdc">Show Sampling Area</div>
<div class="t" style="left:597.1px;top:67.45px;font-size:3.6px;color:#c8c8c8">Opacity</div>
<div style="left:656.7px;top:66.8px;width:12.3px;height:4.3px;background:#474747"></div>
<div class="t" style="left:657.9px;top:67.50px;font-size:3.4px;color:#dcdcdc">50%</div>
<div style="left:600.7px;top:73.1px;width:69.2px;height:0.5px;background:#7a7a7a"></div>
<svg style="left:633.2px;top:74.9px" width="4" height="3.3" viewBox="0 0 4 3.3"><path d="M0.3 3.1 L1.8 0.6 Q2 0.3 2.2 0.6 L3.7 3.1Z" fill="#eaeaea"/></svg>
<div class="t" style="left:597.1px;top:81.35px;font-size:3.68px;color:#c8c8c8">Color</div>
<div style="left:608.9px;top:79.7px;width:6.3px;height:6px;background:#4ccb32"></div>
<div class="t" style="left:624.9px;top:81.35px;font-size:3.43px;color:#c8c8c8">Indicates:</div>
<div class="dd" style="left:643px;top:80.6px;width:29.7px;height:4.3px"></div>
<div class="t" style="left:644.9px;top:81.35px;font-size:3.54px;color:#dcdcdc">Sampling Area</div>
<svg style="left:669.2px;top:82.2px" width="2.4" height="1.6" viewBox="0 0 2.4 1.6"><path d="M0.3 0.3 L1.2 1.2 L2.1 0.3" fill="none" stroke="#b8b8b8" stroke-width="0.45"/></svg>
<div style="left:593.8px;top:93.4px;width:82.4px;height:0.6px;background:#474747"></div>
<svg style="left:597.5px;top:98.4px" width="3" height="2" viewBox="0 0 3 2"><path d="M0.3 0.4 L1.5 1.4 L2.7 0.4" fill="none" stroke="#a8a8a8" stroke-width="0.45"/></svg>
<div class="t" style="left:605px;top:98.15px;font-size:3.5px;color:#bcbcbc">Sampling Area Options</div>
<svg style="left:665.7px;top:96.0px" width="7" height="6" viewBox="0 0 7 6"><path d="M2.4 3.6 A1.9 1.9 0 1 1 4.2 4.8" fill="none" stroke="#d0d0d0" stroke-width="0.6"/><path d="M1.1 3.2 L2.7 2.3 L2.7 4.1Z" fill="#d0d0d0"/><path d="M0.5 5.5 H6.3" stroke="#d0d0d0" stroke-width="0.55"/></svg>
<div style="left:597.9px;top:106.8px;width:18px;height:6.3px;background:#3a3a3a"></div>
<div style="left:616.5px;top:106.8px;width:31.6px;height:6.3px;background:#4a4a4a;border:0.5px solid #3e3e3e"></div>
<div style="left:649px;top:106.8px;width:24.9px;height:6.3px;background:#4a4a4a;border:0.5px solid #3e3e3e"></div>
<div class="t" style="left:602.8px;top:108.45px;font-size:3.99px;color:#e2e2e2">Auto</div>
<div class="t" style="left:621px;top:108.45px;font-size:4.19px;color:#dcdcdc">Rectangular</div>
<div class="t" style="left:653.9px;top:108.45px;font-size:4.12px;color:#dcdcdc">Custom</div>
<div style="left:597.1px;top:119.0px;width:3.5px;height:3.4px;border:0.5px solid #d0d0d0;border-radius:0.6px;background:#3d3d3d"></div><svg style="left:597.35px;top:119.20px" width="3" height="3" viewBox="0 0 3 3"><path d="M0.7 1.5 L1.3 2.1 L2.4 0.9" fill="none" stroke="#eee" stroke-width="0.5"/></svg>
<div class="t" style="left:602.8px;top:119.25px;font-size:3.46px;color:#dcdcdc">Sample All Layers</div>
<div style="left:593.8px;top:127.9px;width:82.4px;height:0.6px;background:#474747"></div>
<svg style="left:597.3px;top:135.0px" width="3" height="2" viewBox="0 0 3 2"><path d="M0.3 0.4 L1.5 1.4 L2.7 0.4" fill="none" stroke="#a8a8a8" stroke-width="0.45"/></svg>
<div class="t" style="left:605px;top:134.45px;font-size:3.48px;color:#bcbcbc">Fill Settings</div>
<svg style="left:665.8px;top:133.1px" width="7" height="6" viewBox="0 0 7 6"><path d="M2.4 3.6 A1.9 1.9 0 1 1 4.2 4.8" fill="none" stroke="#d0d0d0" stroke-width="0.6"/><path d="M1.1 3.2 L2.7 2.3 L2.7 4.1Z" fill="#d0d0d0"/><path d="M0.5 5.5 H6.3" stroke="#d0d0d0" stroke-width="0.55"/></svg>
<div class="t" style="left:602.1px;top:144.75px;font-size:3.49px;color:#c8c8c8">Color Adaptation:</div>
<div class="dd" style="left:632.1px;top:143.9px;width:21.8px;height:4.4px"></div>
<div class="t" style="left:633.9px;top:144.75px;font-size:3.53px;color:#dcdcdc">Default</div>
<svg style="left:650.6px;top:145.5px" width="2.4" height="1.6" viewBox="0 0 2.4 1.6"><path d="M0.3 0.3 L1.2 1.2 L2.1 0.3" fill="none" stroke="#b8b8b8" stroke-width="0.45"/></svg>
<div class="t" style="left:597.3px;top:152.25px;font-size:3.51px;color:#c8c8c8">Rotation Adaptation:</div>
<div class="dd" style="left:632.1px;top:151.5px;width:18.9px;height:4.2px"></div>
<div class="t" style="left:633.9px;top:152.25px;font-size:3.35px;color:#dcdcdc">None</div>
<svg style="left:647.5px;top:153.1px" width="2.4" height="1.6" viewBox="0 0 2.4 1.6"><path d="M0.3 0.3 L1.2 1.2 L2.1 0.3" fill="none" stroke="#b8b8b8" stroke-width="0.45"/></svg>
<div style="left:597.3px;top:161.6px;width:3.4px;height:3.3px;border:0.4px solid #8a8a8a;border-radius:0.6px;background:#474747"></div>
<div class="t" style="left:602.8px;top:161.95px;font-size:3.52px;color:#c8c8c8">Scale</div>
<div style="left:629.7px;top:161.6px;width:3.4px;height:3.3px;border:0.4px solid #8a8a8a;border-radius:0.6px;background:#474747"></div>
<div class="t" style="left:635.6px;top:161.95px;font-size:3.6px;color:#c8c8c8">Mirror</div>
<div style="left:593.8px;top:172.1px;width:82.4px;height:0.6px;background:#474747"></div>
<svg style="left:597.5px;top:176.3px" width="3" height="2" viewBox="0 0 3 2"><path d="M0.3 0.4 L1.5 1.4 L2.7 0.4" fill="none" stroke="#a8a8a8" stroke-width="0.45"/></svg>
<div class="t" style="left:605px;top:175.95px;font-size:3.61px;color:#bcbcbc">Output Settings</div>
<div class="t" style="left:597.1px;top:186.85px;font-size:3.38px;color:#c8c8c8">Output To:</div>
<div class="dd" style="left:614.2px;top:186.3px;width:31.4px;height:4.3px"></div>
<div class="t" style="left:616.1px;top:186.95px;font-size:3.51px;color:#dcdcdc">New Layer</div>
<svg style="left:642.7px;top:187.8px" width="2.4" height="1.6" viewBox="0 0 2.4 1.6"><path d="M0.3 0.3 L1.2 1.2 L2.1 0.3" fill="none" stroke="#b8b8b8" stroke-width="0.45"/></svg>

<!-- CAF footer -->
<div style="left:593.8px;top:358.3px;width:88.2px;height:19.7px;background:#535353;border-top:0.5px solid #494949"></div>
<svg style="left:599.3px;top:364.8px" width="7" height="6" viewBox="0 0 7 6"><path d="M2.4 3.6 A1.9 1.9 0 1 1 4.2 4.8" fill="none" stroke="#d0d0d0" stroke-width="0.6"/><path d="M1.1 3.2 L2.7 2.3 L2.7 4.1Z" fill="#d0d0d0"/><path d="M0.5 5.5 H6.3" stroke="#d0d0d0" stroke-width="0.55"/></svg>
<div style="left:612.2px;top:363.8px;width:19.7px;height:8.9px;border:0.5px solid #777;border-radius:4.5px"></div>
<div class="t" style="left:616.2px;top:366.2px;font-size:3.86px;color:#d8d8d8">Cancel</div>
<div style="left:634.5px;top:363.8px;width:19.4px;height:8.9px;border:0.5px solid #777;border-radius:4.5px"></div>
<div class="t" style="left:639.5px;top:366.2px;font-size:3.86px;color:#d8d8d8">Apply</div>
<div style="left:657px;top:363.8px;width:19.6px;height:8.9px;border:0.6px solid #cfcfcf;border-radius:4.5px"></div>
<div class="t" style="left:664px;top:366.2px;font-size:3.86px;color:#e8e8e8">OK</div>

<!--CANVAS-->
<svg style="left:38px;top:101px" width="409" height="217" viewBox="38 101 409 217">
<defs>
 <linearGradient id="sky" x1="0" y1="101" x2="0" y2="218" gradientUnits="userSpaceOnUse">
  <stop offset="0" stop-color="#abe194"/><stop offset="0.5" stop-color="#a7de90"/><stop offset="1" stop-color="#9ed689"/>
 </linearGradient>
 <linearGradient id="forL" x1="0" y1="178" x2="0" y2="219" gradientUnits="userSpaceOnUse">
  <stop offset="0" stop-color="#7cbd69"/><stop offset="0.4" stop-color="#6aaf58"/><stop offset="1" stop-color="#5c9f4b"/>
 </linearGradient>
 <linearGradient id="forR" x1="0" y1="150" x2="0" y2="219" gradientUnits="userSpaceOnUse">
  <stop offset="0" stop-color="#a3da8c" stop-opacity="0"/><stop offset="0.35" stop-color="#8cc678"/><stop offset="0.75" stop-color="#66aa56"/><stop offset="1" stop-color="#5a9e4a"/>
 </linearGradient>
 <linearGradient id="water" x1="0" y1="220" x2="0" y2="318" gradientUnits="userSpaceOnUse">
  <stop offset="0" stop-color="#64a755"/><stop offset="0.2" stop-color="#67ab57"/><stop offset="0.45" stop-color="#76b864"/><stop offset="0.7" stop-color="#82c26f"/><stop offset="1" stop-color="#87c673"/>
 </linearGradient>
 <linearGradient id="refl" x1="0" y1="219" x2="0" y2="297" gradientUnits="userSpaceOnUse">
  <stop offset="0" stop-color="#625d4f"/><stop offset="0.12" stop-color="#4f4c42"/><stop offset="0.5" stop-color="#4b4a43"/><stop offset="0.8" stop-color="#62615c"/><stop offset="1" stop-color="#7a7975"/>
 </linearGradient>
 <filter id="bl1" x="-10%" y="-40%" width="120%" height="180%"><feGaussianBlur stdDeviation="2.2"/></filter>
 <filter id="bl2" x="-50%" y="-50%" width="200%" height="200%"><feGaussianBlur stdDeviation="3"/></filter>
 <filter id="bl07" x="-10%" y="-10%" width="120%" height="120%"><feGaussianBlur stdDeviation="1.1"/></filter>
 <filter id="blR" x="150" y="120" width="260" height="110" filterUnits="userSpaceOnUse"><feGaussianBlur stdDeviation="1.6 0.6"/></filter>
 <filter id="ragF" x="100" y="160" width="130" height="70" filterUnits="userSpaceOnUse">
  <feTurbulence type="turbulence" baseFrequency="0.25 0.4" numOctaves="2" seed="8" result="t"/>
  <feDisplacementMap in="SourceGraphic" in2="t" scale="4" xChannelSelector="R" yChannelSelector="G" result="d"/>
  <feGaussianBlur in="d" stdDeviation="0.7"/>
 </filter>
 <filter id="bl05" x="-20%" y="-20%" width="140%" height="140%"><feGaussianBlur stdDeviation="0.6"/></filter>
 <filter id="streakD" x="190" y="215" width="180" height="90" filterUnits="userSpaceOnUse">
  <feTurbulence type="fractalNoise" baseFrequency="0.42 0.03" numOctaves="2" seed="4"/>
  <feColorMatrix type="matrix" values="0 0 0 0 0.12  0 0 0 0 0.12  0 0 0 0 0.09  3.6 0 0 0 -1.3"/>
  <feComposite in2="SourceGraphic" operator="in"/>
 </filter>
 <filter id="streakL" x="190" y="215" width="180" height="90" filterUnits="userSpaceOnUse">
  <feTurbulence type="fractalNoise" baseFrequency="0.38 0.03" numOctaves="2" seed="11"/>
  <feColorMatrix type="matrix" values="0 0 0 0 0.58  0 0 0 0 0.58  0 0 0 0 0.56  2.6 0 0 0 -1.55"/>
  <feComposite in2="SourceGraphic" operator="in"/>
 </filter>
 <filter id="foliage" x="195" y="160" width="170" height="60" filterUnits="userSpaceOnUse">
  <feTurbulence type="fractalNoise" baseFrequency="0.35 0.3" numOctaves="2" seed="9"/>
  <feColorMatrix type="matrix" values="0 0 0 0 0.58  0 0 0 0 0.6  0 0 0 0 0.57  4 0 0 0 -2.1"/>
  <feComposite in2="SourceGraphic" operator="in"/>
 </filter>
 <filter id="foliage2" x="195" y="160" width="170" height="60" filterUnits="userSpaceOnUse">
  <feTurbulence type="fractalNoise" baseFrequency="0.4 0.25" numOctaves="2" seed="21"/>
  <feColorMatrix type="matrix" values="0 0 0 0 0.16  0 0 0 0 0.2  0 0 0 0 0.14  3 0 0 0 -1.2"/>
  <feComposite in2="SourceGraphic" operator="in"/>
 </filter>
 <filter id="ragged" x="150" y="120" width="240" height="110" filterUnits="userSpaceOnUse">
  <feTurbulence type="turbulence" baseFrequency="0.45" numOctaves="2" seed="2" result="t"/>
  <feDisplacementMap in="SourceGraphic" in2="t" scale="3.2" xChannelSelector="R" yChannelSelector="G"/>
 </filter>
 <clipPath id="greenClip"><rect x="118.7" y="101" width="324" height="217"/></clipPath>
 <clipPath id="islandClip"><path id="islP" d="M203 218 L204 196 L205 184 L205.5 175.5 L212.4 173 L220 178 L227.3 184.3 L238 186 L245 184.3 L254 175.3 L261.4 173 L267.4 176.8 L271.9 179.8 L279.3 182.8 L285.3 181.3 L294.3 178.3 L299.5 174.6 L311.9 174.6 L320.9 166.3 L328.4 173.8 L334.3 179.8 L341.8 175.3 L345 166 L350 176 L355.2 178.3 L358 186 L361.5 195 L361 212 L357.3 219 Z"/></clipPath>
 <clipPath id="reflClip"><path id="refP" d="M199 219.3 L357.2 219.3 L359.2 236 L360.3 251 L358.2 265.7 L347.6 271 L341.3 276.3 L334.9 289 L322.3 283.7 L314.9 286.8 L309.6 297.4 L303.2 295.3 L296.9 286.8 L292.7 278.4 L285 276.8 L274.7 273.8 L262.7 274.8 L254.8 282.7 L244.8 285 L230.9 285.7 L221 288.7 L215 288.7 L211 274.8 L209 268.8 L199 258.8 Z"/></clipPath>
</defs>
<rect x="38" y="101" width="409" height="217" fill="#fff"/>
<g clip-path="url(#greenClip)">
<rect x="118.7" y="101" width="324" height="217" fill="url(#sky)"/>
<path d="M112 185 L125 184.5 L140 182 L155 180 L170 178.5 L185 177 L200 177 L210 180 L214 190 L214 219.7 L112 219.7Z" fill="url(#forL)" filter="url(#ragF)"/>
<path d="M352 160 L380 156 L410 154 L446 152 L446 219.7 L352 219.7Z" fill="url(#forR)" filter="url(#bl1)"/>
<rect x="118.7" y="219.7" width="324" height="98.3" fill="url(#water)"/>
<rect x="118.7" y="219.2" width="324" height="1" fill="#90cc7b"/>
<path d="M392.5 176 Q392 170.5 397 170.5 Q400 168.8 403 170.2 Q408.5 170 408.3 175 Q408.5 180.3 403 180 Q397 180.8 394 179.5 Q392.3 178.5 392.5 176Z" fill="#b7b4b8"/>
<path d="M334.3 180 Q335 172 342 171.6 Q352 170.5 358 171.2 Q366.5 170.8 366 178 Q366.5 186 362 192 L350 200 L334 200 Z" fill="#b3b1b3"/>
<g fill="#4d993c" color="#4d993c"><g id="gtrees" filter="url(#ragged)"><g id="gtreesRaw">
<path d="M215.0 143.5 L217.0 143.4 L219.0 143.1 L221.0 144.1 L221.0 145.3 L219.0 145.6 L217.0 145.4 L215.0 145.4Z M212.0 146.5 L214.4 146.3 L216.8 145.7 L219.2 145.3 L221.6 145.6 L224.0 147.5 L224.0 148.3 L221.6 150.2 L219.2 150.4 L216.8 149.6 L214.4 149.6 L212.0 148.3Z M207.0 150.4 L209.3 150.8 L211.7 149.5 L214.0 149.0 L216.3 149.2 L218.7 148.9 L221.0 149.2 L223.3 149.6 L225.7 150.7 L228.0 151.2 L228.0 152.4 L225.7 153.5 L223.3 153.2 L221.0 154.0 L218.7 153.9 L216.3 154.2 L214.0 153.7 L211.7 153.7 L209.3 153.3 L207.0 152.9Z M204.0 156.6 L206.2 154.9 L208.5 155.3 L210.8 155.3 L213.0 154.9 L215.2 154.1 L217.5 154.6 L219.8 154.3 L222.0 154.0 L224.2 155.1 L226.5 154.6 L228.8 155.6 L231.0 155.8 L231.0 157.7 L228.8 158.5 L226.5 158.7 L224.2 158.7 L222.0 158.7 L219.8 159.3 L217.5 159.8 L215.2 159.3 L213.0 159.2 L210.8 158.7 L208.5 158.9 L206.2 158.1 L204.0 158.3Z M203.0 161.0 L205.3 160.4 L207.6 160.1 L209.9 159.3 L212.2 160.2 L214.5 159.3 L216.8 159.2 L219.2 159.6 L221.5 159.8 L223.8 159.6 L226.1 159.9 L228.4 159.8 L230.7 160.9 L233.0 161.3 L233.0 163.2 L230.7 162.7 L228.4 163.6 L226.1 163.7 L223.8 164.5 L221.5 163.8 L219.2 164.3 L216.8 164.8 L214.5 163.7 L212.2 164.1 L209.9 164.0 L207.6 163.0 L205.3 163.2 L203.0 163.2Z M201.0 166.5 L203.3 165.8 L205.6 165.2 L207.9 164.3 L210.1 164.8 L212.4 164.5 L214.7 164.1 L217.0 164.2 L219.3 164.4 L221.6 163.9 L223.9 164.3 L226.1 165.3 L228.4 165.5 L230.7 165.1 L233.0 166.2 L233.0 167.3 L230.7 168.7 L228.4 168.9 L226.1 169.1 L223.9 169.0 L221.6 168.7 L219.3 169.2 L217.0 169.5 L214.7 169.0 L212.4 169.0 L210.1 168.5 L207.9 169.2 L205.6 168.4 L203.3 168.3 L201.0 168.1Z M200.0 170.4 L202.3 170.7 L204.6 169.7 L206.9 169.7 L209.1 169.3 L211.4 169.1 L213.7 169.6 L216.0 168.9 L218.3 168.7 L220.6 169.4 L222.9 169.2 L225.1 169.9 L227.4 170.2 L229.7 169.8 L232.0 170.6 L232.0 173.1 L229.7 172.7 L227.4 173.9 L225.1 173.4 L222.9 174.4 L220.6 173.7 L218.3 174.1 L216.0 174.3 L213.7 174.2 L211.4 173.8 L209.1 173.9 L206.9 173.2 L204.6 173.7 L202.3 173.0 L200.0 172.2Z M197.0 175.6 L199.3 175.7 L201.5 174.8 L203.8 175.3 L206.1 174.4 L208.3 174.4 L210.6 174.2 L212.9 173.7 L215.1 174.8 L217.4 174.1 L219.7 174.3 L221.9 175.0 L224.2 174.6 L226.5 175.6 L228.7 175.8 L231.0 176.1 L231.0 177.4 L228.7 178.8 L226.5 178.0 L224.2 178.1 L221.9 178.8 L219.7 179.5 L217.4 179.6 L215.1 179.7 L212.9 179.0 L210.6 179.3 L208.3 179.1 L206.1 179.0 L203.8 178.7 L201.5 179.1 L199.3 178.3 L197.0 178.1Z M193.0 182.4 L195.4 181.7 L197.7 181.0 L200.1 180.5 L202.4 180.6 L204.8 180.0 L207.1 180.1 L209.5 179.9 L211.9 180.8 L214.2 180.1 L216.6 181.3 L218.9 180.7 L221.3 181.3 L223.6 181.9 L226.0 182.5 L226.0 184.0 L223.6 184.1 L221.3 184.9 L218.9 184.4 L216.6 185.2 L214.2 184.9 L211.9 184.6 L209.5 185.8 L207.1 185.2 L204.8 185.3 L202.4 184.5 L200.1 184.9 L197.7 184.4 L195.4 184.3 L193.0 184.4Z M196.0 188.0 L198.2 186.9 L200.5 186.3 L202.8 186.9 L205.0 186.5 L207.2 186.8 L209.5 186.6 L211.8 187.6 L214.0 188.5 L214.0 190.3 L211.8 190.6 L209.5 190.6 L207.2 190.9 L205.0 191.5 L202.8 190.8 L200.5 190.4 L198.2 190.8 L196.0 190.4Z M200.0 193.6 L202.5 192.3 L205.0 191.6 L207.5 193.1 L210.0 193.8 L210.0 196.0 L207.5 197.2 L205.0 197.8 L202.5 196.3 L200.0 195.9Z"/><path d="M218 146 L218 205" stroke="currentColor" stroke-width="1.2"/>
<path d="M237.0 148.5 L238.3 146.5 L239.7 147.5 L241.0 148.1 L241.0 148.7 L239.7 149.9 L238.3 149.2 L237.0 149.5Z M232.0 151.1 L234.6 150.0 L237.2 149.3 L239.8 149.6 L242.4 150.5 L245.0 150.9 L245.0 152.5 L242.4 153.7 L239.8 154.7 L237.2 154.0 L234.6 153.3 L232.0 152.9Z M229.0 155.4 L231.4 155.1 L233.8 154.6 L236.1 154.5 L238.5 153.8 L240.9 154.2 L243.2 154.8 L245.6 155.4 L248.0 156.5 L248.0 158.2 L245.6 158.1 L243.2 159.4 L240.9 158.7 L238.5 158.8 L236.1 159.2 L233.8 159.3 L231.4 158.3 L229.0 157.3Z M228.0 161.3 L230.3 160.6 L232.6 159.8 L234.9 160.2 L237.2 159.7 L239.5 159.1 L241.8 159.4 L244.1 159.6 L246.4 159.8 L248.7 160.8 L251.0 161.1 L251.0 163.3 L248.7 163.4 L246.4 164.2 L244.1 164.3 L241.8 164.7 L239.5 164.4 L237.2 164.4 L234.9 163.5 L232.6 164.3 L230.3 163.7 L228.0 163.3Z M227.0 167.3 L229.4 166.0 L231.7 166.2 L234.1 166.2 L236.5 166.0 L238.8 165.8 L241.2 165.2 L243.5 165.6 L245.9 165.5 L248.3 166.0 L250.6 166.5 L253.0 167.4 L253.0 169.1 L250.6 168.9 L248.3 170.2 L245.9 169.5 L243.5 170.2 L241.2 170.3 L238.8 170.5 L236.5 169.8 L234.1 169.6 L231.7 169.2 L229.4 169.2 L227.0 168.8Z M226.0 173.5 L228.3 172.7 L230.7 172.2 L233.0 171.4 L235.3 171.1 L237.7 171.8 L240.0 170.8 L242.3 171.2 L244.7 171.0 L247.0 171.4 L249.3 171.5 L251.7 171.8 L254.0 172.4 L254.0 174.5 L251.7 175.6 L249.3 176.2 L247.0 176.0 L244.7 175.8 L242.3 176.4 L240.0 176.8 L237.7 175.9 L235.3 176.0 L233.0 176.3 L230.7 175.3 L228.3 174.8 L226.0 174.4Z M225.0 179.4 L227.2 178.0 L229.5 177.9 L231.7 178.4 L233.9 177.1 L236.2 177.5 L238.4 176.8 L240.6 176.7 L242.8 177.7 L245.1 178.1 L247.3 178.3 L249.5 178.0 L251.8 178.6 L254.0 178.5 L254.0 180.8 L251.8 181.1 L249.5 181.2 L247.3 182.0 L245.1 182.3 L242.8 182.4 L240.6 182.2 L238.4 182.1 L236.2 182.4 L233.9 181.8 L231.7 181.4 L229.5 181.0 L227.2 181.5 L225.0 180.4Z"/><path d="M239 150 L239 200" stroke="currentColor" stroke-width="1.2"/>
<path d="M250.0 148.6 L251.7 147.9 L253.3 148.2 L255.0 148.3 L255.0 150.4 L253.3 150.1 L251.7 150.8 L250.0 150.0Z M248.0 153.1 L250.2 152.8 L252.5 151.9 L254.8 152.3 L257.0 153.6 L257.0 155.7 L254.8 155.8 L252.5 156.7 L250.2 156.2 L248.0 154.9Z M246.0 159.4 L248.5 158.6 L251.0 158.3 L253.5 157.3 L256.0 158.4 L258.5 158.7 L261.0 159.7 L261.0 161.7 L258.5 162.5 L256.0 162.4 L253.5 162.2 L251.0 162.5 L248.5 161.5 L246.0 161.5Z M245.0 165.2 L247.4 164.4 L249.9 164.4 L252.3 163.2 L254.7 164.2 L257.1 164.1 L259.6 164.4 L262.0 165.1 L262.0 167.2 L259.6 167.7 L257.1 168.0 L254.7 168.4 L252.3 168.2 L249.9 167.7 L247.4 168.4 L245.0 167.5Z M244.0 172.1 L246.2 171.4 L248.5 171.2 L250.8 170.6 L253.0 170.6 L255.2 170.9 L257.5 171.0 L259.8 171.6 L262.0 171.7 L262.0 173.3 L259.8 174.6 L257.5 174.5 L255.2 175.2 L253.0 175.9 L250.8 174.7 L248.5 175.4 L246.2 175.0 L244.0 174.3Z"/><path d="M252.5 150 L252.5 200" stroke="currentColor" stroke-width="1.2"/>
<path d="M279.0 158.6 L280.3 158.0 L281.7 157.6 L283.0 159.4 L283.0 160.3 L281.7 160.5 L280.3 160.2 L279.0 159.5Z M274.0 163.3 L276.3 162.1 L278.7 161.1 L281.0 160.8 L283.3 161.9 L285.7 162.4 L288.0 162.8 L288.0 165.0 L285.7 165.2 L283.3 166.4 L281.0 166.9 L278.7 165.5 L276.3 165.3 L274.0 164.5Z M270.0 169.3 L272.3 168.7 L274.7 168.0 L277.0 167.5 L279.3 167.2 L281.7 167.8 L284.0 167.6 L286.3 168.3 L288.7 168.7 L291.0 169.0 L291.0 170.7 L288.7 171.9 L286.3 171.8 L284.0 171.8 L281.7 172.7 L279.3 171.7 L277.0 171.6 L274.7 172.0 L272.3 170.9 L270.0 171.2Z M266.0 175.1 L268.2 174.0 L270.5 174.4 L272.8 173.2 L275.0 173.3 L277.2 173.3 L279.5 173.7 L281.8 173.2 L284.0 173.7 L286.2 173.6 L288.5 173.8 L290.8 174.8 L293.0 174.5 L293.0 176.5 L290.8 176.9 L288.5 177.7 L286.2 178.1 L284.0 177.7 L281.8 177.8 L279.5 178.0 L277.2 178.0 L275.0 178.1 L272.8 178.0 L270.5 177.1 L268.2 177.1 L266.0 176.7Z M262.0 181.3 L264.3 180.1 L266.6 179.7 L268.9 179.3 L271.2 180.1 L273.5 179.7 L275.8 178.6 L278.2 179.8 L280.5 179.3 L282.8 179.8 L285.1 179.6 L287.4 180.0 L289.7 180.3 L292.0 180.8 L292.0 182.2 L289.7 183.9 L287.4 183.1 L285.1 183.4 L282.8 184.3 L280.5 184.7 L278.2 184.6 L275.8 184.0 L273.5 184.7 L271.2 184.5 L268.9 184.0 L266.6 183.5 L264.3 183.1 L262.0 183.0Z"/><path d="M281 160 L281 200" stroke="currentColor" stroke-width="1.2"/>
<path d="M307.0 138.4 L309.0 137.7 L311.0 137.7 L313.0 137.7 L313.0 139.2 L311.0 140.5 L309.0 140.5 L307.0 139.6Z M302.0 142.5 L304.6 141.4 L307.2 140.3 L309.8 140.4 L312.4 140.3 L315.0 141.7 L315.0 144.3 L312.4 144.4 L309.8 145.2 L307.2 144.8 L304.6 144.2 L302.0 144.0Z M292.0 147.8 L294.3 147.2 L296.7 146.7 L299.0 145.7 L301.3 145.7 L303.7 146.4 L306.0 145.4 L308.3 145.9 L310.7 145.7 L313.0 146.5 L315.3 147.0 L317.7 146.7 L320.0 147.1 L320.0 148.8 L317.7 149.4 L315.3 149.9 L313.0 150.9 L310.7 151.0 L308.3 150.9 L306.0 151.4 L303.7 151.1 L301.3 150.2 L299.0 150.8 L296.7 149.7 L294.3 149.4 L292.0 148.9Z M295.0 151.8 L297.2 150.8 L299.5 150.9 L301.7 151.2 L303.9 150.4 L306.2 150.7 L308.4 150.8 L310.6 150.5 L312.8 149.8 L315.1 150.4 L317.3 150.2 L319.5 150.7 L321.8 151.0 L324.0 152.5 L324.0 154.3 L321.8 154.6 L319.5 155.1 L317.3 154.2 L315.1 155.0 L312.8 155.5 L310.6 155.7 L308.4 154.7 L306.2 154.6 L303.9 154.9 L301.7 154.8 L299.5 154.3 L297.2 154.5 L295.0 153.9Z M292.0 157.8 L294.3 157.4 L296.5 156.5 L298.8 157.1 L301.1 155.9 L303.4 155.8 L305.6 156.4 L307.9 156.3 L310.2 156.8 L312.5 156.8 L314.7 156.8 L317.0 158.2 L317.0 160.4 L314.7 159.9 L312.5 160.3 L310.2 160.7 L307.9 161.6 L305.6 161.8 L303.4 161.1 L301.1 161.6 L298.8 161.3 L296.5 160.9 L294.3 160.7 L292.0 159.6Z M286.0 162.6 L288.2 163.0 L290.5 162.0 L292.7 161.9 L294.9 161.6 L297.2 160.9 L299.4 160.7 L301.6 161.6 L303.8 161.7 L306.1 161.8 L308.3 161.4 L310.5 161.7 L312.8 162.1 L315.0 163.6 L315.0 165.2 L312.8 165.3 L310.5 166.0 L308.3 165.7 L306.1 166.3 L303.8 166.7 L301.6 165.8 L299.4 166.3 L297.2 166.6 L294.9 165.9 L292.7 166.2 L290.5 165.3 L288.2 165.4 L286.0 164.3Z M290.0 169.6 L292.3 168.4 L294.6 168.1 L296.9 167.8 L299.1 167.5 L301.4 168.0 L303.7 167.3 L306.0 166.6 L308.3 167.6 L310.6 167.3 L312.9 168.0 L315.1 168.1 L317.4 168.0 L319.7 168.2 L322.0 169.3 L322.0 171.0 L319.7 171.3 L317.4 171.8 L315.1 172.0 L312.9 172.1 L310.6 172.4 L308.3 172.6 L306.0 172.1 L303.7 172.0 L301.4 172.2 L299.1 172.5 L296.9 171.3 L294.6 171.3 L292.3 171.6 L290.0 170.8Z M294.0 174.8 L296.4 174.5 L298.7 173.4 L301.1 173.4 L303.5 173.4 L305.8 173.4 L308.2 173.1 L310.5 173.7 L312.9 173.5 L315.3 174.4 L317.6 174.9 L320.0 175.0 L320.0 176.9 L317.6 177.9 L315.3 177.9 L312.9 178.3 L310.5 178.5 L308.2 178.4 L305.8 178.6 L303.5 178.5 L301.1 178.1 L298.7 177.7 L296.4 177.5 L294.0 177.4Z"/><path d="M310 140 L306 200" stroke="currentColor" stroke-width="1.2"/>
<path d="M334.0 142.3 L335.3 141.1 L336.7 140.5 L338.0 141.9 L338.0 143.3 L336.7 143.9 L335.3 143.4 L334.0 143.4Z M326.0 144.4 L328.3 143.4 L330.7 143.4 L333.0 142.8 L335.3 142.8 L337.7 144.0 L340.0 145.0 L340.0 146.6 L337.7 146.9 L335.3 147.7 L333.0 148.2 L330.7 147.5 L328.3 147.6 L326.0 146.7Z M323.6 151.4 L325.9 149.7 L328.2 150.1 L330.5 148.9 L332.8 149.3 L335.1 150.0 L337.4 149.4 L339.7 150.0 L342.0 151.5 L342.0 152.8 L339.7 154.0 L337.4 154.0 L335.1 154.2 L332.8 154.1 L330.5 153.7 L328.2 153.8 L325.9 153.8 L323.6 152.6Z M320.0 157.7 L322.3 157.2 L324.5 155.9 L326.8 156.3 L329.1 156.1 L331.4 156.2 L333.6 155.3 L335.9 155.7 L338.2 156.2 L340.5 156.1 L342.7 157.1 L345.0 157.8 L345.0 158.7 L342.7 159.3 L340.5 160.6 L338.2 159.9 L335.9 160.2 L333.6 161.0 L331.4 160.8 L329.1 160.1 L326.8 160.1 L324.5 160.0 L322.3 160.4 L320.0 159.6Z M318.6 161.8 L320.9 161.5 L323.1 160.8 L325.4 160.3 L327.7 159.9 L329.9 160.5 L332.2 160.8 L334.4 161.0 L336.7 160.9 L339.0 160.9 L341.2 161.7 L343.5 162.0 L343.5 164.1 L341.2 164.4 L339.0 165.0 L336.7 165.3 L334.4 165.5 L332.2 164.9 L329.9 165.1 L327.7 165.0 L325.4 165.5 L323.1 164.5 L320.9 164.1 L318.6 164.3Z M322.0 168.9 L324.4 168.5 L326.8 167.8 L329.1 167.0 L331.5 166.7 L333.9 167.3 L336.2 167.7 L338.6 167.9 L341.0 169.5 L341.0 171.0 L338.6 171.4 L336.2 172.3 L333.9 171.8 L331.5 172.4 L329.1 171.5 L326.8 172.2 L324.4 171.2 L322.0 170.3Z M328.0 174.7 L330.3 174.1 L332.6 173.5 L334.9 173.7 L337.1 173.5 L339.4 174.2 L341.7 174.2 L344.0 174.9 L344.0 176.8 L341.7 177.3 L339.4 177.8 L337.1 178.8 L334.9 178.0 L332.6 177.7 L330.3 177.1 L328.0 176.8Z"/><path d="M336 143 L334 200" stroke="currentColor" stroke-width="1.2"/>
<path d="M344.5 166.3 L345.2 166.0 L345.8 165.9 L346.5 166.0 L346.5 167.4 L345.8 167.8 L345.2 167.5 L344.5 167.0Z M343.0 169.9 L344.7 169.1 L346.3 169.5 L348.0 170.0 L348.0 171.1 L346.3 172.6 L344.7 171.7 L343.0 171.4Z M342.0 175.5 L344.3 174.4 L346.7 174.9 L349.0 175.8 L349.0 176.3 L346.7 176.8 L344.3 177.2 L342.0 177.1Z M341.0 180.6 L343.2 179.5 L345.5 178.8 L347.8 179.9 L350.0 181.1 L350.0 182.3 L347.8 183.7 L345.5 184.4 L343.2 184.2 L341.0 182.4Z"/><path d="M345.5 167 L345.5 200" stroke="currentColor" stroke-width="1.2"/>
<path d="M191.0 201.1 L192.3 200.1 L193.7 200.1 L195.0 202.0 L195.0 202.1 L193.7 202.9 L192.3 203.4 L191.0 203.0Z M188.0 205.2 L190.5 203.7 L193.0 202.8 L195.5 203.3 L198.0 204.4 L198.0 206.5 L195.5 207.5 L193.0 208.7 L190.5 207.8 L188.0 206.8Z M186.0 208.9 L188.3 207.9 L190.7 207.3 L193.0 206.6 L195.3 207.4 L197.7 207.8 L200.0 209.0 L200.0 211.0 L197.7 211.8 L195.3 212.2 L193.0 212.5 L190.7 212.6 L188.3 211.1 L186.0 211.3Z M185.0 214.0 L187.3 212.2 L189.6 212.7 L191.9 211.4 L194.1 211.9 L196.4 212.6 L198.7 212.5 L201.0 213.1 L201.0 215.6 L198.7 216.5 L196.4 216.1 L194.1 217.0 L191.9 217.2 L189.6 216.4 L187.3 215.5 L185.0 215.4Z"/><path d="M193 202 L193 218" stroke="currentColor" stroke-width="1.2"/>
<path d="M262.0 157.4 L263.3 156.1 L264.7 156.0 L266.0 157.9 L266.0 158.0 L264.7 159.2 L263.3 159.6 L262.0 158.3Z M259.0 162.1 L261.2 160.4 L263.4 160.6 L265.6 160.6 L267.8 160.6 L270.0 162.0 L270.0 164.3 L267.8 164.2 L265.6 164.7 L263.4 165.1 L261.2 164.6 L259.0 164.0Z M257.0 168.1 L259.5 166.9 L262.0 166.1 L264.5 166.3 L267.0 166.4 L269.5 166.8 L272.0 167.7 L272.0 170.2 L269.5 170.3 L267.0 170.5 L264.5 171.6 L262.0 170.8 L259.5 170.9 L257.0 170.1Z M256.0 173.6 L258.2 173.6 L260.5 172.6 L262.8 171.9 L265.0 172.6 L267.2 172.6 L269.5 172.9 L271.8 172.8 L274.0 173.5 L274.0 175.9 L271.8 175.9 L269.5 177.3 L267.2 176.6 L265.0 176.9 L262.8 177.0 L260.5 176.8 L258.2 175.9 L256.0 176.3Z"/>
</g></g></g>
<path d="M205 219 L206 196 L220 194 L240 196 L262 188 L290 188 L310 182 L330 178 L345 178 L358 184 L361.5 195 L361 212 L357.3 219Z" fill="#767973"/>
<path d="M334 200 L336 178 Q342 171 352 171 Q364 171 366 178 L362 195 Z" fill="#a9a8a9"/>
<g filter="url(#ragged)"><g id="dtreesRaw">
<path d="M209.8 172.3 L211.9 170.3 L214.1 171.3 L216.3 172.2 L216.3 173.3 L214.1 174.6 L211.9 174.5 L209.8 173.5Z M207.3 176.2 L209.8 174.8 L212.3 174.2 L214.8 175.2 L217.3 176.6 L217.3 178.1 L214.8 178.7 L212.3 179.6 L209.8 178.4 L207.3 177.7Z M205.6 179.6 L208.2 179.1 L210.7 178.3 L213.3 177.7 L215.8 178.8 L218.4 178.9 L221.0 180.1 L221.0 181.8 L218.4 182.6 L215.8 182.8 L213.3 183.0 L210.7 182.2 L208.2 182.6 L205.6 181.8Z M206.2 182.4 L208.6 182.7 L211.0 181.7 L213.3 181.1 L215.7 182.2 L218.1 182.6 L220.4 182.9 L220.4 184.9 L218.1 184.9 L215.7 185.7 L213.3 185.4 L211.0 185.7 L208.6 185.5 L206.2 184.9Z M205.8 186.2 L208.2 185.8 L210.7 185.7 L213.1 185.0 L215.5 186.0 L217.9 186.4 L220.3 186.6 L220.3 187.9 L217.9 188.6 L215.5 188.7 L213.1 189.8 L210.7 189.4 L208.2 188.6 L205.8 188.2Z M202.8 190.2 L205.1 189.7 L207.4 190.4 L209.6 189.2 L211.9 189.8 L214.1 189.8 L216.4 189.5 L218.7 189.1 L220.9 189.9 L223.2 190.8 L225.5 190.4 L225.5 191.7 L223.2 193.0 L220.9 192.9 L218.7 193.2 L216.4 193.3 L214.1 193.4 L211.9 193.5 L209.6 192.9 L207.4 193.4 L205.1 192.9 L202.8 192.4Z M202.0 193.4 L204.4 192.8 L206.8 193.3 L209.2 192.5 L211.6 192.4 L213.9 192.5 L216.3 192.5 L218.7 192.6 L221.1 193.1 L223.5 193.7 L223.5 195.5 L221.1 195.8 L218.7 195.9 L216.3 196.5 L213.9 196.8 L211.6 196.5 L209.2 196.4 L206.8 196.0 L204.4 195.5 L202.0 195.1Z M202.4 198.2 L204.8 196.9 L207.2 196.7 L209.6 197.2 L212.0 196.2 L214.4 196.8 L216.8 196.7 L219.2 197.0 L221.6 196.9 L224.1 197.1 L226.5 197.8 L226.5 199.0 L224.1 200.5 L221.6 200.5 L219.2 200.2 L216.8 200.4 L214.4 201.0 L212.0 201.0 L209.6 200.9 L207.2 199.9 L204.8 199.4 L202.4 199.6Z M199.4 202.2 L201.7 201.4 L204.1 200.8 L206.4 201.1 L208.7 200.2 L211.0 200.1 L213.4 200.0 L215.7 200.7 L218.0 200.8 L220.4 201.0 L222.7 201.0 L225.0 202.0 L225.0 203.1 L222.7 203.9 L220.4 204.6 L218.0 204.4 L215.7 204.4 L213.4 204.9 L211.0 204.3 L208.7 204.2 L206.4 205.0 L204.1 203.9 L201.7 204.1 L199.4 203.3Z M199.7 205.8 L202.0 205.5 L204.4 204.6 L206.7 204.2 L209.0 204.2 L211.4 204.3 L213.7 204.2 L216.0 204.9 L218.4 204.3 L220.7 204.5 L223.0 205.7 L225.4 205.3 L225.4 207.4 L223.0 207.4 L220.7 208.3 L218.4 207.8 L216.0 208.9 L213.7 209.2 L211.4 208.0 L209.0 208.8 L206.7 208.4 L204.4 207.6 L202.0 207.4 L199.7 207.0Z M200.6 209.7 L202.9 209.3 L205.2 208.8 L207.4 208.5 L209.7 208.7 L212.0 209.0 L214.3 208.6 L216.5 208.9 L218.8 208.7 L221.1 209.7 L223.4 209.7 L225.7 210.0 L225.7 211.0 L223.4 212.4 L221.1 212.7 L218.8 212.1 L216.5 212.1 L214.3 213.3 L212.0 213.0 L209.7 212.1 L207.4 212.5 L205.2 212.5 L202.9 212.6 L200.6 211.4Z" fill="#263023"/><path d="M213 173 L213 214" stroke="#263023" stroke-width="1.2"/>
<path d="M206.0 179.0 L206.7 177.9 L207.4 177.6 L208.1 178.9 L208.1 181.3 L207.4 181.9 L206.7 181.7 L206.0 181.1Z M205.8 182.6 L206.6 181.2 L207.3 181.7 L208.1 183.3 L208.1 184.2 L207.3 186.0 L206.6 185.4 L205.8 185.0Z M203.6 186.4 L205.8 184.6 L208.0 185.4 L210.2 185.9 L210.2 188.1 L208.0 189.4 L205.8 189.2 L203.6 188.2Z M203.7 189.8 L206.3 188.9 L208.9 189.1 L211.4 189.6 L211.4 191.9 L208.9 192.8 L206.3 191.8 L203.7 191.9Z M201.9 192.4 L204.2 191.9 L206.4 191.7 L208.6 191.3 L210.9 192.4 L210.9 194.3 L208.6 194.8 L206.4 195.5 L204.2 194.7 L201.9 194.9Z M202.4 196.5 L205.2 195.4 L208.0 195.0 L210.8 196.3 L210.8 198.9 L208.0 199.6 L205.2 198.9 L202.4 198.8Z M201.7 200.2 L204.1 198.9 L206.4 198.8 L208.8 198.4 L211.2 200.3 L211.2 202.0 L208.8 202.3 L206.4 202.5 L204.1 202.0 L201.7 201.5Z M199.4 203.6 L201.7 202.9 L204.0 202.6 L206.4 201.9 L208.7 203.1 L211.0 202.7 L213.4 203.9 L213.4 205.4 L211.0 206.5 L208.7 206.5 L206.4 206.9 L204.0 206.0 L201.7 205.5 L199.4 205.0Z M200.7 207.1 L203.0 206.1 L205.3 205.6 L207.5 205.4 L209.8 206.5 L212.0 207.6 L212.0 208.9 L209.8 209.2 L207.5 209.4 L205.3 209.6 L203.0 209.1 L200.7 209.1Z M199.9 211.5 L202.4 209.6 L204.9 209.1 L207.4 210.1 L209.9 210.7 L212.4 211.4 L212.4 212.5 L209.9 213.4 L207.4 213.8 L204.9 213.6 L202.4 213.7 L199.9 212.8Z" fill="#2e3a2a"/><path d="M207 180 L207 214" stroke="#2e3a2a" stroke-width="1.2"/>
<path d="M220.9 177.7 L221.7 176.0 L222.4 175.5 L223.2 177.0 L223.2 178.7 L222.4 179.1 L221.7 179.7 L220.9 178.7Z M219.7 181.6 L221.1 180.6 L222.6 180.2 L224.1 180.9 L224.1 182.3 L222.6 183.2 L221.1 183.3 L219.7 182.6Z M219.5 185.2 L221.1 183.5 L222.8 183.9 L224.4 185.1 L224.4 185.9 L222.8 187.0 L221.1 187.6 L219.5 186.4Z M216.9 188.1 L219.2 186.6 L221.4 186.5 L223.7 187.1 L225.9 187.6 L225.9 189.0 L223.7 189.8 L221.4 190.1 L219.2 190.4 L216.9 189.7Z M216.2 190.6 L218.5 189.9 L220.7 189.1 L223.0 188.9 L225.3 190.5 L227.6 191.1 L227.6 192.0 L225.3 193.2 L223.0 193.5 L220.7 193.2 L218.5 193.6 L216.2 192.9Z M215.8 193.6 L218.1 193.8 L220.5 193.3 L222.8 192.5 L225.2 193.4 L227.6 194.1 L227.6 195.7 L225.2 196.0 L222.8 196.4 L220.5 197.1 L218.1 196.7 L215.8 195.4Z M216.1 197.4 L218.7 196.1 L221.3 195.5 L223.9 196.5 L226.5 197.8 L226.5 199.4 L223.9 199.6 L221.3 201.0 L218.7 200.6 L216.1 199.8Z M215.4 201.1 L217.9 200.6 L220.3 199.8 L222.7 199.6 L225.1 200.0 L227.5 200.5 L230.0 201.1 L230.0 202.9 L227.5 203.1 L225.1 204.1 L222.7 204.5 L220.3 204.0 L217.9 203.2 L215.4 202.8Z M214.4 205.4 L216.7 204.8 L219.0 203.8 L221.3 204.3 L223.5 204.6 L225.8 204.3 L228.1 205.6 L228.1 207.2 L225.8 207.1 L223.5 207.9 L221.3 208.0 L219.0 208.4 L216.7 207.8 L214.4 207.2Z M215.5 209.1 L217.9 207.5 L220.3 207.7 L222.7 208.1 L225.1 208.1 L227.5 208.3 L227.5 211.0 L225.1 211.8 L222.7 211.9 L220.3 211.8 L217.9 210.6 L215.5 210.4Z M213.3 212.5 L215.5 211.9 L217.7 211.4 L220.0 211.4 L222.2 210.9 L224.4 211.1 L226.6 211.2 L228.8 212.0 L231.0 211.9 L231.0 214.2 L228.8 214.4 L226.6 215.0 L224.4 215.4 L222.2 214.9 L220.0 215.6 L217.7 215.3 L215.5 214.4 L213.3 214.0Z" fill="#232b1f"/><path d="M222 178 L222 214" stroke="#232b1f" stroke-width="1.2"/>
<path d="M227.2 182.6 L228.4 181.6 L229.5 182.5 L230.6 183.2 L230.6 184.6 L229.5 185.4 L228.4 186.3 L227.2 185.3Z M226.9 186.4 L228.4 185.7 L229.8 185.3 L231.3 186.6 L231.3 187.6 L229.8 189.3 L228.4 188.8 L226.9 188.4Z M224.1 190.6 L226.5 190.2 L228.9 189.3 L231.3 190.2 L233.7 190.5 L233.7 191.8 L231.3 192.8 L228.9 193.3 L226.5 193.5 L224.1 192.2Z M225.6 194.2 L228.1 193.1 L230.5 193.1 L233.0 193.8 L233.0 196.2 L230.5 196.8 L228.1 197.0 L225.6 196.0Z M223.2 198.7 L225.5 197.8 L227.8 197.2 L230.2 197.1 L232.5 196.8 L234.8 198.0 L234.8 199.8 L232.5 200.8 L230.2 201.0 L227.8 201.1 L225.5 200.9 L223.2 200.0Z M221.4 202.4 L223.8 200.9 L226.2 201.2 L228.6 201.0 L231.0 201.1 L233.4 200.8 L235.8 201.4 L235.8 204.0 L233.4 204.7 L231.0 204.5 L228.6 205.3 L226.2 204.9 L223.8 204.2 L221.4 203.5Z M221.9 206.0 L224.4 204.6 L226.9 204.1 L229.3 203.8 L231.8 204.3 L234.2 204.4 L236.7 206.0 L236.7 207.1 L234.2 208.4 L231.8 208.5 L229.3 208.2 L226.9 208.3 L224.4 208.3 L221.9 207.0Z M220.9 209.9 L223.1 208.6 L225.3 208.9 L227.6 207.7 L229.8 207.8 L232.0 208.6 L234.2 208.8 L236.5 209.6 L236.5 211.0 L234.2 211.4 L232.0 211.6 L229.8 212.0 L227.6 212.9 L225.3 212.3 L223.1 211.8 L220.9 210.7Z" fill="#34402f"/><path d="M229 184 L229 214" stroke="#34402f" stroke-width="1.2"/>
<path d="M236.8 185.7 L237.6 185.3 L238.3 184.6 L239.1 185.9 L239.1 187.8 L238.3 188.9 L237.6 188.6 L236.8 187.6Z M235.5 189.6 L237.1 188.2 L238.8 189.2 L240.4 189.8 L240.4 191.1 L238.8 192.0 L237.1 192.3 L235.5 191.8Z M234.9 193.8 L237.0 193.2 L239.1 192.5 L241.1 193.9 L241.1 195.0 L239.1 196.8 L237.0 197.0 L234.9 195.5Z M233.7 197.6 L236.6 196.6 L239.4 197.0 L242.3 198.0 L242.3 199.2 L239.4 200.0 L236.6 201.1 L233.7 199.2Z M230.9 201.4 L233.1 200.4 L235.4 201.0 L237.6 199.9 L239.8 200.0 L242.0 200.6 L244.2 202.1 L244.2 203.6 L242.0 204.4 L239.8 204.1 L237.6 204.9 L235.4 203.7 L233.1 204.2 L230.9 203.7Z M232.3 205.1 L234.6 204.9 L236.9 203.7 L239.2 204.4 L241.6 204.1 L243.9 205.3 L243.9 206.4 L241.6 207.1 L239.2 208.0 L236.9 207.5 L234.6 207.3 L232.3 206.4Z M230.4 208.3 L233.0 208.2 L235.5 208.2 L238.0 206.9 L240.5 207.8 L243.1 207.8 L245.6 208.4 L245.6 210.0 L243.1 211.2 L240.5 211.7 L238.0 211.3 L235.5 210.9 L233.0 211.2 L230.4 210.5Z M230.5 211.9 L233.0 211.1 L235.6 210.8 L238.1 210.9 L240.6 210.5 L243.1 211.2 L245.7 212.3 L245.7 213.9 L243.1 214.8 L240.6 215.1 L238.1 215.3 L235.6 215.1 L233.0 214.1 L230.5 213.3Z" fill="#263023"/><path d="M238 187 L238 214" stroke="#263023" stroke-width="1.2"/>
<path d="M252.3 172.3 L254.7 171.6 L257.1 171.0 L259.6 172.8 L259.6 173.8 L257.1 175.5 L254.7 174.9 L252.3 174.3Z M252.4 176.6 L254.9 175.5 L257.4 175.8 L259.9 177.1 L259.9 178.0 L257.4 179.3 L254.9 179.5 L252.4 178.3Z M249.3 180.0 L251.5 179.2 L253.7 178.6 L255.9 179.2 L258.2 179.6 L260.4 179.2 L262.6 180.4 L262.6 182.0 L260.4 182.5 L258.2 183.3 L255.9 182.9 L253.7 182.9 L251.5 182.1 L249.3 182.3Z M248.3 183.6 L250.8 182.8 L253.3 182.1 L255.8 181.3 L258.3 182.2 L260.7 182.8 L263.2 183.9 L263.2 184.4 L260.7 185.1 L258.3 185.6 L255.8 186.3 L253.3 185.9 L250.8 185.2 L248.3 184.4Z M247.3 186.9 L249.8 185.3 L252.3 185.9 L254.8 185.2 L257.3 184.7 L259.7 185.8 L262.2 185.7 L264.7 187.0 L264.7 187.8 L262.2 189.3 L259.7 188.7 L257.3 189.3 L254.8 189.5 L252.3 189.2 L249.8 188.4 L247.3 188.1Z M244.9 190.1 L247.2 189.0 L249.5 188.9 L251.8 188.1 L254.1 188.3 L256.4 188.5 L258.7 188.2 L261.0 188.0 L263.3 189.2 L265.6 188.4 L267.9 189.6 L267.9 190.8 L265.6 192.1 L263.3 191.4 L261.0 191.9 L258.7 192.4 L256.4 192.6 L254.1 192.7 L251.8 192.6 L249.5 192.0 L247.2 192.0 L244.9 190.5Z M241.5 193.8 L243.8 192.6 L246.1 192.2 L248.4 192.4 L250.7 191.7 L253.0 191.3 L255.3 192.1 L257.6 192.2 L259.9 192.4 L262.2 192.8 L264.5 193.0 L266.8 193.2 L266.8 195.2 L264.5 194.7 L262.2 195.6 L259.9 195.6 L257.6 196.4 L255.3 195.6 L253.0 196.6 L250.7 196.3 L248.4 195.9 L246.1 195.5 L243.8 195.2 L241.5 195.1Z M242.6 196.7 L245.0 196.2 L247.3 196.1 L249.6 195.3 L251.9 195.6 L254.2 194.7 L256.5 194.7 L258.8 195.4 L261.1 195.6 L263.5 195.6 L265.8 195.8 L268.1 197.1 L268.1 198.7 L265.8 199.0 L263.5 199.1 L261.1 199.4 L258.8 199.2 L256.5 199.1 L254.2 199.5 L251.9 198.9 L249.6 199.6 L247.3 198.5 L245.0 198.3 L242.6 198.8Z M244.1 200.4 L246.5 200.5 L248.9 199.9 L251.3 199.1 L253.7 198.9 L256.1 198.9 L258.5 199.3 L260.9 199.5 L263.3 199.1 L265.7 199.7 L268.1 199.7 L270.5 200.7 L270.5 202.5 L268.1 202.9 L265.7 203.1 L263.3 203.0 L260.9 203.6 L258.5 203.4 L256.1 204.1 L253.7 203.3 L251.3 203.7 L248.9 203.2 L246.5 203.2 L244.1 202.8Z M242.4 203.8 L244.7 203.4 L247.1 202.9 L249.5 203.3 L251.8 202.5 L254.2 202.3 L256.5 202.7 L258.9 202.2 L261.3 202.9 L263.6 203.3 L266.0 203.2 L268.4 203.9 L270.7 204.1 L270.7 205.8 L268.4 205.7 L266.0 205.6 L263.6 206.5 L261.3 206.1 L258.9 206.2 L256.5 206.7 L254.2 206.3 L251.8 206.1 L249.5 206.4 L247.1 205.6 L244.7 205.3 L242.4 204.9Z M241.4 208.5 L243.6 208.1 L245.8 206.9 L248.1 207.2 L250.3 206.4 L252.5 206.3 L254.7 206.0 L256.9 206.9 L259.1 206.3 L261.4 206.3 L263.6 207.2 L265.8 206.5 L268.0 207.1 L270.2 208.0 L272.5 208.4 L272.5 209.3 L270.2 209.6 L268.0 210.1 L265.8 210.1 L263.6 210.7 L261.4 210.6 L259.1 210.6 L256.9 211.3 L254.7 210.7 L252.5 210.4 L250.3 210.2 L248.1 210.9 L245.8 210.4 L243.6 209.4 L241.4 209.3Z M243.6 212.2 L245.9 210.9 L248.1 211.6 L250.3 210.9 L252.5 210.6 L254.8 210.8 L257.0 210.0 L259.2 209.9 L261.5 210.7 L263.7 210.2 L265.9 211.2 L268.1 211.0 L270.4 211.8 L270.4 213.8 L268.1 213.9 L265.9 214.2 L263.7 214.5 L261.5 214.1 L259.2 214.5 L257.0 215.1 L254.8 214.2 L252.5 214.2 L250.3 214.6 L248.1 214.4 L245.9 214.0 L243.6 213.7Z" fill="#2e3a2a"/><path d="M256 173.5 L256 214" stroke="#2e3a2a" stroke-width="1.2"/>
<path d="M266.6 176.1 L268.8 174.5 L270.9 174.6 L273.0 176.0 L273.0 177.9 L270.9 179.0 L268.8 179.0 L266.6 177.7Z M266.8 179.9 L269.0 178.9 L271.2 178.8 L273.3 180.0 L273.3 181.2 L271.2 181.6 L269.0 181.6 L266.8 180.6Z M266.2 183.4 L269.0 182.6 L271.7 182.5 L274.4 183.0 L274.4 184.9 L271.7 185.3 L269.0 185.7 L266.2 185.0Z M265.2 187.5 L267.5 186.6 L269.8 185.5 L272.2 186.0 L274.5 187.8 L274.5 188.9 L272.2 190.2 L269.8 190.0 L267.5 189.5 L265.2 189.3Z M263.0 190.7 L265.2 190.3 L267.4 189.2 L269.6 189.3 L271.8 189.2 L274.0 189.0 L276.2 190.0 L278.4 190.3 L278.4 192.1 L276.2 193.2 L274.0 192.9 L271.8 193.0 L269.6 192.9 L267.4 193.5 L265.2 192.8 L263.0 191.6Z M262.9 195.0 L265.2 194.5 L267.5 193.8 L269.7 193.4 L272.0 192.9 L274.3 194.0 L276.6 194.2 L278.9 194.9 L278.9 196.0 L276.6 196.9 L274.3 196.8 L272.0 197.5 L269.7 197.1 L267.5 196.7 L265.2 196.9 L262.9 195.9Z M262.1 198.5 L264.6 197.3 L267.1 197.4 L269.6 197.3 L272.1 197.5 L274.6 197.1 L277.1 197.4 L279.6 198.1 L279.6 199.4 L277.1 200.9 L274.6 201.3 L272.1 200.7 L269.6 200.8 L267.1 201.0 L264.6 200.3 L262.1 199.4Z M262.0 202.0 L264.5 201.4 L267.0 201.2 L269.5 200.9 L272.1 200.5 L274.6 201.6 L277.1 201.9 L277.1 203.6 L274.6 204.6 L272.1 204.0 L269.5 205.2 L267.0 204.3 L264.5 204.2 L262.0 203.9Z M262.1 205.5 L264.6 204.9 L267.0 204.5 L269.4 204.4 L271.9 204.0 L274.3 204.1 L276.7 204.7 L279.2 205.5 L279.2 207.8 L276.7 207.3 L274.3 208.5 L271.9 208.5 L269.4 207.9 L267.0 208.4 L264.6 207.7 L262.1 207.6Z M262.5 209.8 L264.9 208.9 L267.3 207.9 L269.7 208.1 L272.1 208.4 L274.5 209.0 L276.9 209.8 L276.9 211.2 L274.5 212.0 L272.1 212.8 L269.7 212.2 L267.3 212.2 L264.9 212.0 L262.5 210.7Z" fill="#232b1f"/><path d="M270 177 L270 214" stroke="#232b1f" stroke-width="1.2"/>
<path d="M276.9 180.3 L278.3 179.2 L279.7 178.8 L281.1 180.0 L281.1 181.8 L279.7 182.1 L278.3 182.7 L276.9 181.5Z M275.6 183.0 L278.0 181.8 L280.4 182.4 L282.8 183.8 L282.8 185.1 L280.4 186.3 L278.0 186.2 L275.6 184.7Z M275.1 187.3 L277.7 185.5 L280.4 185.4 L283.1 186.9 L283.1 188.9 L280.4 189.3 L277.7 189.2 L275.1 187.9Z M274.4 189.8 L276.8 189.5 L279.2 187.9 L281.6 189.4 L284.0 190.2 L284.0 191.2 L281.6 192.8 L279.2 192.3 L276.8 191.9 L274.4 191.4Z M274.2 193.7 L276.6 192.8 L279.0 192.2 L281.3 192.2 L283.7 194.0 L283.7 195.3 L281.3 195.6 L279.0 195.9 L276.6 196.4 L274.2 194.6Z M272.1 196.8 L274.6 195.5 L277.2 195.2 L279.7 195.6 L282.2 196.5 L284.7 196.5 L284.7 198.6 L282.2 198.6 L279.7 199.6 L277.2 199.7 L274.6 199.4 L272.1 198.2Z M271.2 199.6 L273.4 199.0 L275.6 199.4 L277.9 198.4 L280.1 199.4 L282.3 199.6 L284.5 199.5 L286.8 200.5 L286.8 201.5 L284.5 202.5 L282.3 202.1 L280.1 202.8 L277.9 202.4 L275.6 203.0 L273.4 202.9 L271.2 202.2Z M271.9 203.7 L274.2 203.6 L276.4 202.5 L278.6 201.9 L280.9 202.9 L283.1 202.8 L285.3 204.2 L285.3 205.5 L283.1 205.6 L280.9 206.6 L278.6 206.5 L276.4 206.1 L274.2 205.7 L271.9 205.9Z M270.6 208.0 L272.9 207.1 L275.3 205.9 L277.6 206.3 L280.0 205.9 L282.3 206.9 L284.7 206.5 L287.0 207.6 L287.0 209.1 L284.7 210.3 L282.3 209.8 L280.0 210.3 L277.6 210.1 L275.3 210.2 L272.9 209.7 L270.6 209.4Z M271.9 212.1 L274.5 210.4 L277.0 210.1 L279.5 210.1 L282.1 210.5 L284.6 210.9 L287.2 211.4 L287.2 213.7 L284.6 213.7 L282.1 214.4 L279.5 214.9 L277.0 214.5 L274.5 213.9 L271.9 212.7Z" fill="#34402f"/><path d="M279 181 L279 214" stroke="#34402f" stroke-width="1.2"/>
<path d="M296.3 173.3 L297.9 172.2 L299.5 172.1 L301.1 174.1 L301.1 175.7 L299.5 176.1 L297.9 176.6 L296.3 175.8Z M293.9 178.1 L296.4 176.2 L298.9 175.6 L301.4 176.3 L303.9 177.9 L303.9 179.2 L301.4 180.2 L298.9 179.9 L296.4 180.1 L293.9 179.1Z M292.3 181.7 L294.7 181.3 L297.0 180.4 L299.4 179.9 L301.8 180.4 L304.1 180.4 L306.5 181.5 L306.5 182.9 L304.1 184.3 L301.8 183.9 L299.4 184.7 L297.0 183.8 L294.7 183.8 L292.3 183.0Z M291.1 185.3 L293.7 184.4 L296.2 183.8 L298.8 183.8 L301.3 184.4 L303.9 184.0 L306.4 185.6 L306.4 186.4 L303.9 187.9 L301.3 187.5 L298.8 188.2 L296.2 187.3 L293.7 187.2 L291.1 187.0Z M289.7 189.0 L292.1 188.5 L294.5 187.4 L296.9 187.8 L299.3 187.2 L301.7 187.8 L304.1 188.0 L306.5 187.8 L308.9 188.8 L308.9 191.0 L306.5 191.4 L304.1 191.5 L301.7 191.3 L299.3 192.3 L296.9 192.2 L294.5 191.9 L292.1 191.0 L289.7 190.0Z M285.8 193.3 L288.2 192.6 L290.5 192.6 L292.9 192.0 L295.3 191.9 L297.7 190.9 L300.1 191.3 L302.5 191.6 L304.9 191.5 L307.3 192.8 L309.7 193.2 L309.7 194.2 L307.3 194.8 L304.9 195.0 L302.5 195.1 L300.1 196.1 L297.7 195.7 L295.3 195.6 L292.9 195.5 L290.5 195.0 L288.2 194.7 L285.8 195.0Z M282.3 196.8 L284.6 196.7 L286.9 196.0 L289.2 195.8 L291.5 196.1 L293.8 195.0 L296.0 195.8 L298.3 195.4 L300.6 195.5 L302.9 195.0 L305.2 195.9 L307.5 195.4 L309.7 195.8 L312.0 196.4 L314.3 196.4 L314.3 198.2 L312.0 198.3 L309.7 199.2 L307.5 199.4 L305.2 199.3 L302.9 199.2 L300.6 199.7 L298.3 199.3 L296.0 200.0 L293.8 199.0 L291.5 199.8 L289.2 199.0 L286.9 199.0 L284.6 198.4 L282.3 198.6Z M286.2 199.9 L288.5 198.9 L290.8 198.9 L293.1 199.0 L295.4 199.0 L297.7 198.0 L299.9 197.7 L302.2 198.2 L304.5 198.9 L306.8 198.4 L309.1 199.1 L311.4 199.7 L313.7 199.6 L313.7 201.0 L311.4 201.3 L309.1 201.7 L306.8 201.8 L304.5 202.9 L302.2 202.4 L299.9 202.1 L297.7 202.5 L295.4 202.1 L293.1 202.3 L290.8 202.4 L288.5 202.4 L286.2 201.5Z M286.8 204.1 L289.1 202.9 L291.4 203.2 L293.6 203.4 L295.9 203.1 L298.2 202.9 L300.5 202.4 L302.8 203.0 L305.0 202.7 L307.3 202.9 L309.6 204.0 L311.9 203.5 L311.9 205.1 L309.6 206.2 L307.3 206.5 L305.0 206.9 L302.8 206.8 L300.5 206.7 L298.2 206.5 L295.9 206.2 L293.6 206.6 L291.4 206.1 L289.1 206.3 L286.8 205.6Z M286.1 208.4 L288.3 207.7 L290.6 207.8 L292.9 207.0 L295.2 206.8 L297.5 206.3 L299.8 206.4 L302.0 207.2 L304.3 207.3 L306.6 207.2 L308.9 208.0 L311.2 207.6 L311.2 209.4 L308.9 209.9 L306.6 210.1 L304.3 210.9 L302.0 211.1 L299.8 211.0 L297.5 211.0 L295.2 211.2 L292.9 210.6 L290.6 210.6 L288.3 210.3 L286.1 209.3Z M287.4 211.2 L289.7 211.1 L292.1 210.2 L294.4 210.0 L296.8 209.7 L299.1 209.2 L301.5 210.2 L303.8 210.5 L306.2 210.7 L308.5 210.5 L310.9 210.8 L310.9 213.1 L308.5 213.8 L306.2 213.4 L303.8 214.2 L301.5 213.4 L299.1 214.7 L296.8 213.9 L294.4 214.0 L292.1 213.3 L289.7 213.3 L287.4 212.3Z" fill="#263023"/><path d="M299 174.5 L299 214" stroke="#263023" stroke-width="1.2"/>
<path d="M311.0 170.6 L311.7 169.6 L312.5 169.6 L313.2 171.5 L313.2 172.7 L312.5 174.0 L311.7 174.2 L311.0 172.1Z M308.5 174.7 L311.0 174.4 L313.4 173.9 L315.8 175.3 L315.8 176.7 L313.4 177.1 L311.0 177.5 L308.5 177.0Z M307.7 177.9 L310.0 177.5 L312.3 176.3 L314.6 177.9 L316.9 178.8 L316.9 180.0 L314.6 181.2 L312.3 180.7 L310.0 180.3 L307.7 180.3Z M307.7 181.5 L310.3 180.6 L313.0 180.5 L315.6 181.8 L315.6 183.4 L313.0 184.0 L310.3 184.8 L307.7 182.9Z M305.0 186.1 L307.2 184.7 L309.4 184.7 L311.6 184.3 L313.9 184.4 L316.1 185.3 L318.3 185.1 L318.3 187.0 L316.1 187.3 L313.9 188.2 L311.6 188.8 L309.4 187.8 L307.2 187.6 L305.0 186.8Z M305.1 189.5 L307.3 188.1 L309.5 188.6 L311.7 187.5 L313.9 188.3 L316.1 188.4 L318.3 189.9 L318.3 191.0 L316.1 191.0 L313.9 191.7 L311.7 191.8 L309.5 192.3 L307.3 191.0 L305.1 191.0Z M304.4 192.7 L306.6 193.0 L308.8 191.9 L311.0 191.5 L313.2 192.2 L315.4 192.0 L317.6 192.3 L319.8 192.7 L319.8 194.7 L317.6 195.3 L315.4 196.2 L313.2 195.8 L311.0 195.4 L308.8 195.8 L306.6 195.6 L304.4 194.3Z M303.8 197.2 L306.1 195.6 L308.3 195.5 L310.5 195.5 L312.8 194.6 L315.0 195.7 L317.2 196.0 L319.5 196.2 L321.7 196.7 L321.7 198.5 L319.5 198.8 L317.2 199.6 L315.0 198.9 L312.8 199.0 L310.5 199.3 L308.3 199.5 L306.1 198.2 L303.8 198.4Z M304.0 201.1 L306.4 199.2 L308.9 199.6 L311.3 199.0 L313.7 198.8 L316.2 200.0 L318.6 200.4 L318.6 202.5 L316.2 202.8 L313.7 203.2 L311.3 203.7 L308.9 203.1 L306.4 202.4 L304.0 201.5Z M304.0 204.2 L306.2 202.7 L308.4 202.3 L310.7 202.6 L312.9 201.7 L315.1 202.8 L317.3 203.1 L319.6 203.1 L321.8 203.1 L321.8 205.4 L319.6 205.9 L317.3 206.5 L315.1 205.9 L312.9 206.7 L310.7 206.4 L308.4 206.3 L306.2 206.3 L304.0 204.7Z M303.1 207.7 L305.4 206.5 L307.6 206.4 L309.9 205.3 L312.1 206.3 L314.4 206.1 L316.7 206.0 L318.9 206.6 L318.9 208.6 L316.7 209.7 L314.4 209.6 L312.1 210.4 L309.9 210.3 L307.6 210.0 L305.4 209.5 L303.1 208.5Z M305.3 210.7 L307.8 210.4 L310.4 210.0 L313.0 209.0 L315.5 209.5 L318.1 210.6 L320.6 211.1 L320.6 213.0 L318.1 213.5 L315.5 214.1 L313.0 214.0 L310.4 214.0 L307.8 213.2 L305.3 213.2Z" fill="#2e3a2a"/><path d="M312 172 L312 214" stroke="#2e3a2a" stroke-width="1.2"/>
<path d="M319.2 165.2 L320.6 163.6 L322.0 164.0 L323.4 165.2 L323.4 167.0 L322.0 168.1 L320.6 167.4 L319.2 166.3Z M316.5 168.7 L318.9 168.2 L321.4 167.0 L323.8 167.5 L326.3 169.1 L326.3 170.1 L323.8 171.0 L321.4 171.5 L318.9 171.8 L316.5 170.4Z M316.0 172.6 L318.6 171.9 L321.2 170.9 L323.8 171.6 L326.4 172.1 L326.4 173.9 L323.8 174.6 L321.2 175.0 L318.6 175.0 L316.0 174.3Z M314.7 175.3 L317.1 174.5 L319.4 175.1 L321.8 174.5 L324.1 174.5 L326.5 174.7 L328.8 175.8 L328.8 177.3 L326.5 178.1 L324.1 178.7 L321.8 178.9 L319.4 178.3 L317.1 178.3 L314.7 176.8Z M311.5 179.5 L313.8 179.0 L316.0 179.1 L318.3 177.9 L320.5 178.1 L322.8 178.1 L325.0 178.7 L327.2 179.1 L329.5 179.3 L331.7 179.4 L331.7 180.6 L329.5 181.8 L327.2 182.0 L325.0 182.4 L322.8 181.8 L320.5 182.9 L318.3 182.4 L316.0 182.2 L313.8 181.5 L311.5 181.3Z M310.0 183.0 L312.3 182.6 L314.5 182.5 L316.8 182.2 L319.0 182.1 L321.3 181.3 L323.5 181.7 L325.8 181.7 L328.1 182.6 L330.3 182.2 L332.6 183.1 L332.6 184.2 L330.3 185.2 L328.1 184.9 L325.8 185.5 L323.5 185.4 L321.3 186.3 L319.0 186.2 L316.8 186.1 L314.5 185.2 L312.3 185.4 L310.0 184.8Z M311.5 186.2 L314.0 186.5 L316.4 185.3 L318.9 185.6 L321.3 184.9 L323.7 185.2 L326.2 185.2 L328.6 186.0 L331.1 186.7 L331.1 187.8 L328.6 188.7 L326.2 188.8 L323.7 189.2 L321.3 189.7 L318.9 189.2 L316.4 189.4 L314.0 189.0 L311.5 188.6Z M307.8 189.8 L310.1 189.3 L312.4 189.0 L314.7 188.2 L317.0 188.8 L319.3 188.3 L321.6 187.5 L323.9 188.4 L326.2 188.0 L328.5 188.9 L330.7 188.8 L333.0 188.8 L335.3 189.4 L335.3 190.9 L333.0 192.2 L330.7 192.4 L328.5 192.7 L326.2 192.6 L323.9 191.9 L321.6 192.8 L319.3 192.2 L317.0 191.9 L314.7 191.5 L312.4 191.7 L310.1 191.4 L307.8 190.8Z M307.2 192.9 L309.4 192.2 L311.6 191.4 L313.8 192.0 L316.1 191.2 L318.3 190.7 L320.5 191.4 L322.7 191.5 L324.9 191.3 L327.1 191.4 L329.3 192.3 L331.5 192.2 L333.7 193.2 L333.7 194.2 L331.5 195.1 L329.3 194.6 L327.1 194.5 L324.9 194.7 L322.7 195.4 L320.5 195.0 L318.3 194.9 L316.1 195.3 L313.8 194.5 L311.6 194.7 L309.4 195.2 L307.2 193.9Z M310.3 196.4 L312.7 195.1 L315.1 195.0 L317.5 194.8 L319.9 194.5 L322.3 194.5 L324.7 194.6 L327.1 195.5 L329.5 195.5 L331.9 196.2 L331.9 198.1 L329.5 198.7 L327.1 198.3 L324.7 199.1 L322.3 198.4 L319.9 198.5 L317.5 199.1 L315.1 199.0 L312.7 198.4 L310.3 198.3Z M309.4 199.7 L311.7 198.8 L313.9 198.7 L316.2 198.5 L318.5 198.4 L320.8 198.0 L323.1 197.9 L325.4 197.8 L327.7 198.2 L329.9 198.2 L332.2 198.7 L334.5 200.0 L334.5 201.0 L332.2 201.9 L329.9 201.1 L327.7 201.5 L325.4 202.4 L323.1 202.2 L320.8 202.2 L318.5 202.4 L316.2 202.2 L313.9 201.1 L311.7 201.8 L309.4 201.5Z M310.0 203.2 L312.4 201.4 L314.8 202.1 L317.2 201.8 L319.6 201.3 L322.0 201.0 L324.4 201.1 L326.8 201.7 L329.1 202.3 L331.5 202.2 L331.5 204.6 L329.1 204.5 L326.8 205.4 L324.4 204.7 L322.0 205.6 L319.6 204.8 L317.2 204.6 L314.8 205.4 L312.4 204.9 L310.0 204.2Z M309.3 206.4 L311.7 205.8 L314.1 205.2 L316.6 205.2 L319.0 204.2 L321.4 204.5 L323.8 204.3 L326.2 205.6 L328.6 205.9 L331.0 206.3 L331.0 207.7 L328.6 208.1 L326.2 207.8 L323.8 208.5 L321.4 208.7 L319.0 208.3 L316.6 208.0 L314.1 208.2 L311.7 207.7 L309.3 207.6Z M307.3 209.5 L309.5 209.5 L311.7 209.1 L313.9 208.8 L316.1 208.9 L318.3 208.8 L320.5 208.1 L322.7 208.9 L324.9 208.7 L327.1 209.3 L329.4 209.6 L331.6 208.9 L333.8 210.3 L333.8 211.7 L331.6 211.5 L329.4 212.2 L327.1 212.3 L324.9 212.2 L322.7 212.3 L320.5 213.1 L318.3 212.9 L316.1 212.6 L313.9 212.8 L311.7 211.9 L309.5 211.8 L307.3 211.2Z" fill="#232b1f"/><path d="M321 166 L321 214" stroke="#232b1f" stroke-width="1.2"/>
<path d="M330.4 173.5 L331.3 171.4 L332.3 172.5 L333.2 173.2 L333.2 174.7 L332.3 175.3 L331.3 175.6 L330.4 174.4Z M330.0 176.6 L331.4 175.5 L332.7 175.9 L334.0 177.2 L334.0 178.2 L332.7 179.8 L331.4 179.8 L330.0 178.3Z M329.9 180.6 L331.4 179.0 L332.8 178.7 L334.2 180.5 L334.2 182.2 L332.8 183.2 L331.4 182.4 L329.9 181.8Z M327.9 183.0 L330.4 182.5 L332.9 182.4 L335.4 183.3 L335.4 184.3 L332.9 185.8 L330.4 186.4 L327.9 184.3Z M327.8 186.3 L330.0 185.0 L332.3 185.3 L334.6 185.0 L336.9 186.7 L336.9 187.8 L334.6 188.5 L332.3 189.6 L330.0 188.9 L327.8 188.5Z M327.6 190.7 L330.0 189.6 L332.3 188.7 L334.7 189.9 L337.0 190.3 L337.0 191.8 L334.7 193.3 L332.3 193.8 L330.0 192.6 L327.6 192.0Z M325.3 195.0 L327.8 193.9 L330.2 192.9 L332.6 192.6 L335.0 192.9 L337.4 194.0 L339.8 195.2 L339.8 196.4 L337.4 196.9 L335.0 196.9 L332.6 197.5 L330.2 197.2 L327.8 197.3 L325.3 196.5Z M325.9 197.8 L328.2 197.2 L330.5 196.5 L332.8 196.4 L335.2 197.1 L337.5 197.3 L337.5 199.1 L335.2 199.7 L332.8 200.4 L330.5 200.1 L328.2 200.3 L325.9 199.4Z M324.2 200.7 L326.6 199.6 L329.1 199.1 L331.5 198.7 L333.9 200.0 L336.4 199.8 L338.8 200.8 L338.8 201.8 L336.4 203.2 L333.9 203.5 L331.5 202.9 L329.1 203.3 L326.6 202.8 L324.2 202.1Z M327.1 203.8 L329.3 203.2 L331.6 202.6 L333.9 202.3 L336.2 202.7 L338.4 203.6 L338.4 205.9 L336.2 206.3 L333.9 206.9 L331.6 206.5 L329.3 206.2 L327.1 205.6Z M325.4 207.7 L327.7 206.9 L330.0 206.9 L332.2 205.7 L334.5 207.0 L336.8 206.4 L339.0 208.1 L339.0 209.0 L336.8 209.4 L334.5 210.0 L332.2 211.0 L330.0 210.7 L327.7 210.2 L325.4 208.7Z M326.5 210.8 L328.8 209.5 L331.1 209.0 L333.3 209.5 L335.6 209.8 L337.9 210.8 L337.9 212.5 L335.6 213.5 L333.3 213.2 L331.1 213.6 L328.8 213.0 L326.5 212.4Z" fill="#34402f"/><path d="M332 174 L332 214" stroke="#34402f" stroke-width="1.2"/>
<path d="M343.0 166.3 L343.7 164.4 L344.3 165.5 L345.0 166.4 L345.0 167.6 L344.3 168.3 L343.7 168.3 L343.0 167.9Z M342.9 170.9 L343.6 168.9 L344.4 168.9 L345.1 170.9 L345.1 172.2 L344.4 173.3 L343.6 172.5 L342.9 172.1Z M342.7 173.6 L343.5 172.4 L344.4 172.5 L345.2 173.6 L345.2 176.0 L344.4 176.2 L343.5 176.9 L342.7 175.8Z M340.0 177.3 L342.8 175.9 L345.6 176.3 L348.4 177.8 L348.4 179.7 L345.6 179.8 L342.8 179.9 L340.0 178.7Z M341.6 181.3 L343.2 179.2 L344.8 179.7 L346.4 181.3 L346.4 182.0 L344.8 183.0 L343.2 183.6 L341.6 182.6Z M340.0 184.8 L342.7 183.5 L345.4 183.0 L348.1 184.8 L348.1 186.4 L345.4 186.9 L342.7 187.6 L340.0 186.3Z M339.8 188.7 L342.0 187.4 L344.3 187.4 L346.5 188.1 L348.8 188.1 L348.8 190.5 L346.5 191.5 L344.3 190.9 L342.0 191.4 L339.8 190.3Z M340.4 192.4 L342.7 190.5 L345.0 190.9 L347.4 192.2 L347.4 193.2 L345.0 194.9 L342.7 195.0 L340.4 193.2Z M338.8 196.1 L341.3 194.3 L343.8 193.9 L346.3 195.2 L348.8 196.3 L348.8 197.3 L346.3 197.8 L343.8 198.3 L341.3 198.0 L338.8 197.9Z M340.4 199.3 L342.9 197.8 L345.5 197.2 L348.1 199.5 L348.1 200.2 L345.5 201.6 L342.9 201.4 L340.4 200.0Z M340.4 203.1 L343.1 201.1 L345.8 201.1 L348.4 202.8 L348.4 204.2 L345.8 204.9 L343.1 205.6 L340.4 204.5Z M340.2 205.7 L342.8 204.5 L345.3 204.6 L347.9 205.4 L347.9 206.9 L345.3 208.8 L342.8 208.7 L340.2 207.3Z M339.7 208.8 L342.0 208.4 L344.3 207.6 L346.6 208.0 L348.9 208.7 L348.9 210.2 L346.6 211.2 L344.3 211.4 L342.0 211.0 L339.7 210.0Z M338.1 213.0 L340.5 211.4 L342.9 211.4 L345.3 211.6 L347.7 211.3 L350.1 212.7 L350.1 213.4 L347.7 214.6 L345.3 215.0 L342.9 215.1 L340.5 214.6 L338.1 213.6Z" fill="#263023"/><path d="M344 167 L344 214" stroke="#263023" stroke-width="1.2"/>
<path d="M348.7 175.2 L349.6 173.8 L350.4 173.6 L351.2 175.0 L351.2 176.1 L350.4 177.3 L349.6 178.1 L348.7 177.3Z M347.2 179.2 L349.0 178.2 L350.7 177.6 L352.4 179.3 L352.4 181.0 L350.7 181.5 L349.0 182.3 L347.2 180.7Z M347.7 182.9 L349.2 181.7 L350.7 181.7 L352.3 183.3 L352.3 185.1 L350.7 185.6 L349.2 185.6 L347.7 184.8Z M346.9 186.8 L348.8 184.6 L350.8 185.2 L352.8 187.1 L352.8 188.0 L350.8 188.7 L348.8 188.5 L346.9 188.5Z M345.2 190.1 L347.4 189.0 L349.6 188.4 L351.8 188.0 L354.0 189.0 L354.0 191.5 L351.8 192.3 L349.6 192.7 L347.4 191.4 L345.2 191.5Z M346.3 192.7 L349.0 190.9 L351.7 191.4 L354.3 192.2 L354.3 194.1 L351.7 195.7 L349.0 195.6 L346.3 194.2Z M344.7 196.7 L346.9 195.3 L349.1 195.0 L351.3 195.9 L353.5 196.0 L355.7 196.9 L355.7 198.5 L353.5 199.1 L351.3 198.9 L349.1 199.7 L346.9 198.5 L344.7 198.3Z M345.5 200.4 L348.0 199.3 L350.5 198.7 L353.0 198.7 L355.5 200.3 L355.5 201.8 L353.0 203.2 L350.5 203.2 L348.0 202.5 L345.5 202.2Z M344.6 204.7 L346.9 203.1 L349.3 202.4 L351.6 202.6 L353.9 203.3 L356.3 203.9 L356.3 206.2 L353.9 206.8 L351.6 206.9 L349.3 206.5 L346.9 206.6 L344.6 206.0Z M343.9 207.3 L346.5 206.2 L349.2 206.5 L351.8 206.5 L354.4 206.3 L357.0 207.1 L357.0 208.9 L354.4 209.1 L351.8 210.6 L349.2 209.8 L346.5 210.2 L343.9 208.4Z M345.4 211.1 L348.0 209.9 L350.5 210.1 L353.0 209.7 L355.5 211.3 L355.5 212.7 L353.0 213.2 L350.5 213.9 L348.0 214.3 L345.4 213.3Z" fill="#2e3a2a"/><path d="M350 176 L350 214" stroke="#2e3a2a" stroke-width="1.2"/>
<path d="M354.4 177.8 L355.2 176.3 L356.0 176.6 L356.7 178.2 L356.7 179.6 L356.0 180.4 L355.2 180.9 L354.4 179.2Z M353.4 182.4 L354.7 180.6 L356.0 180.5 L357.4 182.0 L357.4 183.5 L356.0 184.5 L354.7 184.5 L353.4 183.4Z M352.6 185.2 L354.4 184.2 L356.2 183.8 L358.1 185.3 L358.1 187.5 L356.2 187.8 L354.4 188.0 L352.6 187.3Z M353.6 189.7 L354.8 187.8 L356.1 188.5 L357.4 190.1 L357.4 191.2 L356.1 192.2 L354.8 192.1 L353.6 190.7Z M352.4 193.1 L354.5 192.4 L356.6 192.4 L358.6 193.1 L358.6 194.9 L356.6 195.7 L354.5 196.4 L352.4 194.7Z M351.4 197.0 L354.3 195.5 L357.2 196.0 L360.2 196.3 L360.2 198.1 L357.2 199.2 L354.3 199.5 L351.4 198.3Z M351.5 199.8 L353.7 199.1 L356.0 198.4 L358.3 198.6 L360.5 200.3 L360.5 201.4 L358.3 203.0 L356.0 202.4 L353.7 202.3 L351.5 201.1Z M349.7 204.0 L352.0 203.0 L354.2 202.6 L356.4 202.6 L358.6 203.0 L360.9 204.6 L360.9 206.3 L358.6 206.1 L356.4 206.2 L354.2 206.8 L352.0 206.8 L349.7 205.6Z M350.0 207.2 L352.6 205.8 L355.1 206.0 L357.7 206.4 L360.2 206.8 L360.2 208.9 L357.7 209.4 L355.1 209.9 L352.6 209.4 L350.0 208.7Z M351.4 210.7 L354.2 209.1 L357.0 209.0 L359.8 210.9 L359.8 211.5 L357.0 213.3 L354.2 213.1 L351.4 212.0Z" fill="#232b1f"/><path d="M355.5 179 L355.5 214" stroke="#232b1f" stroke-width="1.2"/>
</g></g>
<g clip-path="url(#islandClip)">
<rect x="195" y="160" width="170" height="60" fill="#8a8d87" filter="url(#foliage)" opacity="0.5"/>
<path d="M195 204 L210 200 L225 203 L240 199 L255 202 L270 198 L285 201 L300 199 L315 202 L330 198 L345 201 L365 199 L365 220 L195 220Z" fill="#2c3927" opacity="0.85"/>
</g>
<g stroke="#9a9a94" stroke-width="0.7" opacity="0.7"><path d="M250 184 V208 M325 182 V206"/></g>
<g stroke="#262c22" stroke-width="0.8"><path d="M300 180 V208 M272 186 V208"/></g>
<path d="M203 219 L208 217.5 L214 216.8 L222 217.2 L232 216.5 L244 216.8 L256 216 L266 215 L274 213 L281 211.5 L292 210.8 L303 211.2 L316 212 L326 213.5 L336 215 L343 216.5 L352 218 L357 219.2 Z" fill="#a69276"/>
<path d="M206 217.5 L220 216.5 L240 217 L262 216 L278 215 L300 215 L320 216.5 L340 218 L357 218.8 L357 219.2 L206 219.2Z" fill="#6f624f" opacity="0.55"/>
<path d="M336 215 L346 212.5 L358 213 L357 219 L340 219Z" fill="#33402f"/>
<g fill="#a69276" opacity="0.8"><path d="M210 217 Q216 213 222 217Z"/><path d="M236 217 Q244 213.5 250 216.8Z"/></g>
<g filter="url(#bl2)" opacity="0.45"><use href="#refP" fill="#3f6a34" transform="translate(0 2)"/></g>
<use href="#refP" fill="url(#refl)"/>
<g clip-path="url(#reflClip)">
<g filter="url(#blR)" transform="translate(0 219) scale(1 -1.42) translate(0 -219)">
<use href="#islP" fill="#2c3129" opacity="0.6"/>
<use href="#gtreesRaw" fill="#2c3129" color="#2c3129" opacity="0.8"/>
</g>
<rect x="190" y="215" width="180" height="90" fill="#000" filter="url(#streakD)"/>
<rect x="190" y="215" width="180" height="90" fill="#fff" filter="url(#streakL)" opacity="0.22"/>
<g fill="#a2a2a0" filter="url(#bl2)" opacity="0.6"><ellipse cx="208" cy="262" rx="7" ry="8"/><ellipse cx="262" cy="270" rx="22" ry="6"/><ellipse cx="350" cy="256" rx="8" ry="12"/><ellipse cx="232" cy="280" rx="9" ry="5"/><ellipse cx="320" cy="278" rx="8" ry="4"/></g>
<rect x="190" y="219" width="180" height="3" fill="#7b7463" opacity="0.6"/>
<g fill="#2e322a" filter="url(#bl1)" opacity="0.6"><ellipse cx="218" cy="282" rx="4" ry="8"/><ellipse cx="307" cy="288" rx="4.5" ry="9"/><ellipse cx="336" cy="281" rx="3.5" ry="8"/></g>
</g>
</g>
<g fill="none" stroke="#fff" stroke-width="0.9"><path d="M38.5 101.5 H118.5 V317.5 H38.5 Z M442.5 101.5 H447 M442.5 101.5 V317.5 H447"/></g>
<g fill="none" stroke="#1e1e1e" stroke-width="0.9" stroke-dasharray="1.4 1.4"><path d="M38.5 101.5 H118.5 V317.5 H38.5 Z M442.5 101.5 H447 M442.5 101.5 V317.5 H447"/></g>
</svg>
<!--/CANVAS-->
<!--PREVIEW-->
<svg style="left:453px;top:168px" width="135.3" height="60.4" viewBox="453 168 135.3 60.4">
<defs>
 <linearGradient id="psky" x1="0" y1="168" x2="0" y2="201" gradientUnits="userSpaceOnUse"><stop offset="0" stop-color="#f0f0f0"/><stop offset="0.45" stop-color="#e6e6e6"/><stop offset="1" stop-color="#d2d2d2"/></linearGradient>
 <linearGradient id="phL" x1="0" y1="187" x2="0" y2="201" gradientUnits="userSpaceOnUse"><stop offset="0" stop-color="#cfcfcf" stop-opacity="0"/><stop offset="0.4" stop-color="#a6a6a6"/><stop offset="1" stop-color="#707070"/></linearGradient>
 <linearGradient id="phR" x1="0" y1="178" x2="0" y2="201" gradientUnits="userSpaceOnUse"><stop offset="0" stop-color="#d6d6d6" stop-opacity="0"/><stop offset="0.4" stop-color="#8e8e8e"/><stop offset="1" stop-color="#5a5a5a"/></linearGradient>
 <linearGradient id="pwat" x1="0" y1="201" x2="0" y2="228.4" gradientUnits="userSpaceOnUse"><stop offset="0" stop-color="#777"/><stop offset="0.3" stop-color="#999"/><stop offset="0.6" stop-color="#b8b8b8"/><stop offset="1" stop-color="#c6c5c9"/></linearGradient>
 <filter id="pbl" x="-20%" y="-50%" width="140%" height="200%"><feGaussianBlur stdDeviation="1.2"/></filter>
 <filter id="pbl2" x="-20%" y="-50%" width="140%" height="200%"><feGaussianBlur stdDeviation="0.5"/></filter>
 <filter id="pbl3" x="-20%" y="-20%" width="140%" height="140%"><feGaussianBlur stdDeviation="0.6"/></filter>
</defs>
<rect x="453" y="168" width="135.3" height="60.4" fill="url(#psky)"/>
<path d="M450 191 L470 189.5 L490 189 L505 190 L505 202 L450 202Z" fill="url(#phL)" filter="url(#pbl)"/>
<path d="M535 186 L555 183 L575 181.5 L592 181 L592 202 L535 202Z" fill="url(#phR)" filter="url(#pbl)"/>
<rect x="453" y="201" width="135.3" height="27.4" fill="url(#pwat)"/>
<rect x="453" y="200.3" width="135.3" height="0.9" fill="#c9c9c9"/>
<g transform="translate(497.5 168) scale(0.2765) translate(-195 -101)">
 <path d="M204 219 L205 196 L220 192 L240 194 L262 186 L290 186 L310 180 L330 176 L345 176 L358 184 L361.5 195 L361 212 L357.3 219Z" fill="#5c625a"/>
 <path d="M201 210 L203 186 L212 160 L220 156 L232 162 L250 160 L262 170 L280 168 L296 152 L310 150 L322 158 L336 152 L344 166 L352 182 L361 195 L361 219 L201 219Z" fill="#2f452c" opacity="0.55"/>
 <use href="#gtreesRaw" fill="#2e472b" color="#2e472b"/>
 <use href="#dtreesRaw" filter="url(#pbl3)"/>
 <path d="M270 219 L278 214 L290 211 L305 211 L330 214 L345 217.5 L357 219Z" fill="#a58f70" opacity="0.6"/>
 <g clip-path="url(#reflClip)">
  <g filter="url(#blR)" transform="translate(0 219) scale(1 -1.0) translate(0 -219)">
   <path d="M201 210 L203 186 L212 160 L220 156 L232 162 L250 160 L262 170 L280 168 L296 152 L310 150 L322 158 L336 152 L344 166 L352 182 L361 195 L361 219 L201 219Z" fill="#3a4838" opacity="0.5"/>
   <use href="#gtreesRaw" fill="#2e3f2b" color="#2e3f2b"/>
   <use href="#dtreesRaw"/>
  </g>
  <rect x="190" y="215" width="180" height="90" fill="#000" filter="url(#streakD)" opacity="0.4"/>
 </g>
</g>
</svg>
<!--/PREVIEW-->
</body></html>
